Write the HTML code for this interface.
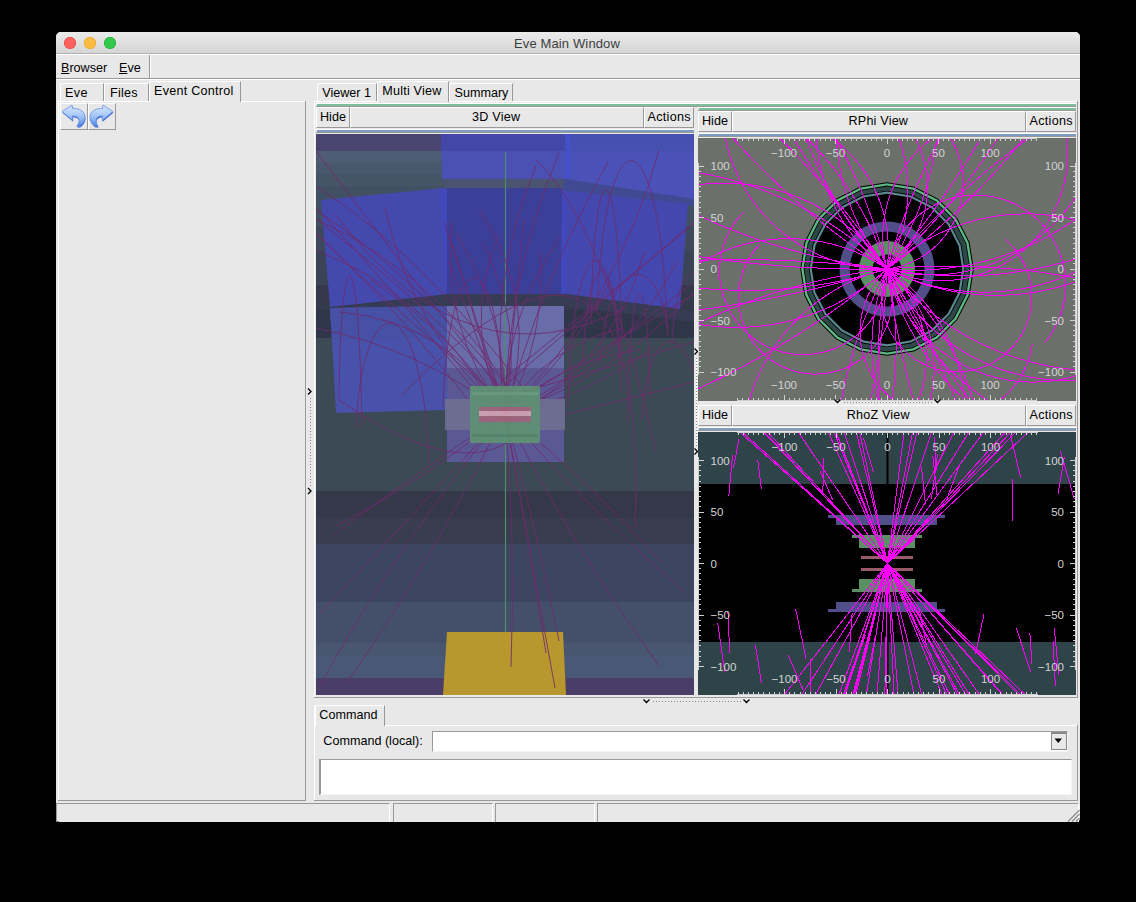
<!DOCTYPE html>
<html><head><meta charset="utf-8"><style>
*{margin:0;padding:0;box-sizing:border-box}
html,body{width:1136px;height:902px;background:#000;overflow:hidden;font-family:"Liberation Sans", sans-serif;font-size:12.6px;color:#000}
.a{position:absolute}
.t{position:absolute;white-space:nowrap;line-height:14px}
svg{position:absolute;display:block}
</style></head><body>
<div class="a" style="left:56px;top:32px;width:1024px;height:790px;background:#e8e8e8;border-radius:5px 5px 4px 4px"></div><div class="a" style="left:56px;top:32px;width:1024px;height:22px;background:linear-gradient(#ebebeb,#d4d4d4);border-radius:5px 5px 0 0"></div><div class="a" style="left:56px;top:53px;width:1024px;height:1px;background:#b1b1b1"></div><div class="a" style="left:64px;top:37px;width:12px;height:12px;border-radius:50%;background:#fc615d;box-shadow:inset 0 0 0 0.5px #e0443e"></div><div class="a" style="left:84px;top:37px;width:12px;height:12px;border-radius:50%;background:#fdbc40;box-shadow:inset 0 0 0 0.5px #dea123"></div><div class="a" style="left:104px;top:37px;width:12px;height:12px;border-radius:50%;background:#34c84a;box-shadow:inset 0 0 0 0.5px #1aab29"></div><div class="t" style="left:514px;top:37px;font-size:13px;color:#3e3e3e;letter-spacing:0.13px">Eve Main Window</div><div class="a" style="left:56px;top:54px;width:1024px;height:1px;background:#fff"></div><div class="t" style="left:61px;top:61px;font-size:12.6px;color:#000;"><u>B</u>rowser</div><div class="t" style="left:119px;top:61px;font-size:12.6px;color:#000;"><u>E</u>ve</div><div class="a" style="left:149px;top:55px;width:1px;height:23px;background:#999"></div><div class="a" style="left:150px;top:55px;width:1px;height:23px;background:#fff"></div><div class="a" style="left:56px;top:78px;width:1024px;height:1px;background:#999"></div><div class="a" style="left:56px;top:79px;width:1024px;height:1px;background:#fff"></div><div class="a" style="left:60px;top:83px;width:44px;height:18px;background:#e8e8e8;border-top:1px solid #fff;border-left:1px solid #fff;border-right:1px solid #999;border-top-left-radius:2px"></div><div class="t" style="left:65px;top:86px;font-size:12.6px;color:#000;letter-spacing:0.4px">Eve</div><div class="a" style="left:104px;top:83px;width:45px;height:18px;background:#e8e8e8;border-top:1px solid #fff;border-left:1px solid #fff;border-right:1px solid #999;border-top-left-radius:2px"></div><div class="t" style="left:110px;top:86px;font-size:12.6px;color:#000;letter-spacing:0.25px">Files</div><div class="a" style="left:149px;top:81px;width:92px;height:21px;background:#e8e8e8;border-top:1px solid #fff;border-left:1px solid #fff;border-right:1px solid #999;border-top-left-radius:2px"></div><div class="t" style="left:154px;top:84px;font-size:12.6px;color:#000;letter-spacing:0.25px">Event Control</div><div class="a" style="left:58px;top:101px;width:91px;height:1px;background:#fff"></div><div class="a" style="left:241px;top:101px;width:64px;height:1px;background:#fff"></div><div class="a" style="left:58px;top:101px;width:1px;height:699px;background:#fff"></div><div class="a" style="left:305px;top:101px;width:1px;height:700px;background:#999"></div><div class="a" style="left:58px;top:800px;width:248px;height:1px;background:#999"></div><div class="a" style="left:60px;top:103px;width:28px;height:27px;background:#e8e8e8;border-top:1px solid #fff;border-left:1px solid #fff;border-right:1px solid #999;border-bottom:1px solid #999"></div><div class="a" style="left:88px;top:103px;width:28px;height:27px;background:#e8e8e8;border-top:1px solid #fff;border-left:1px solid #fff;border-right:1px solid #999;border-bottom:1px solid #999"></div><svg style="left:0;top:0" width="130" height="135" viewBox="0 0 130 135">
<defs><linearGradient id="ug" x1="0" y1="0" x2="0" y2="1"><stop offset="0" stop-color="#cfe2fd"/><stop offset="0.35" stop-color="#b8d4fb"/><stop offset="0.7" stop-color="#8ab2f4"/><stop offset="1" stop-color="#4f82e8"/></linearGradient></defs>
<path d="M62,111.5 L72,105 L72.6,108.4 C78,108.2 83.5,110.3 84.8,115.3 C85.8,119.5 83.5,124 79.8,126.2 L76.8,126.2 C79.2,123.5 79.6,120.5 78.4,118.6 C77.2,116.8 75.2,116 72.6,116 L72.8,120.6 Z" transform="translate(0.4,1.2)" fill="#3a66d0"/>
<path d="M62,111.5 L72,105 L72.6,108.4 C78,108.2 83.5,110.3 84.8,115.3 C85.8,119.5 83.5,124 79.8,126.2 L76.8,126.2 C79.2,123.5 79.6,120.5 78.4,118.6 C77.2,116.8 75.2,116 72.6,116 L72.8,120.6 Z" transform="translate(175.4,1.2) scale(-1,1)" fill="#3a66d0"/>
<path d="M62,111.5 L72,105 L72.6,108.4 C78,108.2 83.5,110.3 84.8,115.3 C85.8,119.5 83.5,124 79.8,126.2 L76.8,126.2 C79.2,123.5 79.6,120.5 78.4,118.6 C77.2,116.8 75.2,116 72.6,116 L72.8,120.6 Z" fill="url(#ug)" stroke="#5a88e0" stroke-width="0.7"/>
<path d="M62,111.5 L72,105 L72.6,108.4 C78,108.2 83.5,110.3 84.8,115.3 C85.8,119.5 83.5,124 79.8,126.2 L76.8,126.2 C79.2,123.5 79.6,120.5 78.4,118.6 C77.2,116.8 75.2,116 72.6,116 L72.8,120.6 Z" transform="translate(175,0) scale(-1,1)" fill="url(#ug)" stroke="#5a88e0" stroke-width="0.7"/>
</svg><div class="a" style="left:314px;top:101px;width:1px;height:1px;background:#fff"></div><svg style="left:306px;top:385px" width="8" height="112" viewBox="306 385 8 112"><path d="M308,388.5 L311,391.5 L308,394.5 M308,488 L311,491 L308,494" stroke="#000" stroke-width="1.3" fill="none"/></svg><div class="a" style="left:310px;top:398px;width:1px;height:88px;background:repeating-linear-gradient(#8a8a8a 0 1px,transparent 1px 3px)"></div><div class="a" style="left:317px;top:83px;width:60px;height:18px;background:#e8e8e8;border-top:1px solid #fff;border-left:1px solid #fff;border-right:1px solid #999;border-top-left-radius:2px"></div><div class="t" style="left:322.3px;top:86px;font-size:12.6px;color:#000;">Viewer 1</div><div class="a" style="left:377px;top:81px;width:72px;height:21px;background:#e8e8e8;border-top:1px solid #fff;border-left:1px solid #fff;border-right:1px solid #999;border-top-left-radius:2px"></div><div class="t" style="left:382.3px;top:84px;font-size:12.6px;color:#000;letter-spacing:0.2px">Multi View</div><div class="a" style="left:449px;top:83px;width:64px;height:18px;background:#e8e8e8;border-top:1px solid #fff;border-left:1px solid #fff;border-right:1px solid #999;border-top-left-radius:2px"></div><div class="t" style="left:454.5px;top:86px;font-size:12.6px;color:#000;">Summary</div><div class="a" style="left:314px;top:101px;width:63px;height:1px;background:#fff"></div><div class="a" style="left:449px;top:101px;width:629px;height:1px;background:#fff"></div><div class="a" style="left:314px;top:101px;width:1px;height:597px;background:#fff"></div><div class="a" style="left:1077px;top:101px;width:1px;height:597px;background:#999"></div><div class="a" style="left:314px;top:697px;width:764px;height:1px;background:#999"></div><div class="a" style="left:316px;top:103px;width:760px;height:1px;background:#fff"></div><div class="a" style="left:317px;top:104px;width:759px;height:2px;background:#7dbd9c;"></div><div class="a" style="left:316px;top:106px;width:760px;height:1px;background:#999"></div><div class="a" style="left:316px;top:107px;width:34px;height:21px;background:#e8e8e8;border-top:1px solid #fff;border-left:1px solid #fff;border-right:1px solid #999;border-bottom:1px solid #999"></div><div class="t" style="left:320px;top:110px;font-size:12.6px;color:#000;">Hide</div><div class="a" style="left:350px;top:107px;width:294px;height:21px;background:#e8e8e8;border-top:1px solid #fff;border-left:1px solid #fff;border-right:1px solid #999;border-bottom:1px solid #999"></div><div class="t" style="left:472px;top:110px;font-size:12.6px;color:#000;letter-spacing:0.25px">3D View</div><div class="a" style="left:644px;top:107px;width:50px;height:21px;background:#e8e8e8;border-top:1px solid #fff;border-left:1px solid #fff;border-right:1px solid #999;border-bottom:1px solid #999"></div><div class="t" style="left:647.5px;top:110px;font-size:12.6px;color:#000;letter-spacing:0.3px">Actions</div><div class="a" style="left:316px;top:129px;width:378px;height:1px;background:#fff"></div><div class="a" style="left:317px;top:130px;width:377px;height:2px;background:#7c9dc0;"></div><div class="a" style="left:316px;top:132px;width:378px;height:1px;background:#999"></div><svg style="left:316px;top:134px" width="378" height="561" viewBox="316 134 378 561"><rect x="316" y="134" width="378" height="17" fill="#4a4470"/><rect x="316" y="151" width="378" height="12" fill="#4e5c74"/><rect x="316" y="163" width="378" height="11" fill="#4a586e"/><rect x="316" y="174" width="378" height="12" fill="#465468"/><rect x="316" y="186" width="378" height="40" fill="#415062"/><rect x="316" y="226" width="378" height="25" fill="#3e4a5c"/><rect x="316" y="251" width="378" height="34" fill="#3a4456"/><rect x="316" y="285" width="378" height="25" fill="#343a4c"/><rect x="316" y="310" width="378" height="28" fill="#30364a"/><rect x="316" y="338" width="378" height="153" fill="#3c4a55"/><rect x="316" y="491" width="378" height="27" fill="#343848"/><rect x="316" y="518" width="378" height="26" fill="#383e50"/><rect x="316" y="544" width="378" height="58" fill="#3c4660"/><rect x="316" y="602" width="378" height="41" fill="#44506a"/><rect x="316" y="643" width="378" height="13" fill="#485670"/><rect x="316" y="656" width="378" height="22" fill="#4a5878"/><rect x="316" y="678" width="378" height="17" fill="#4a3e68"/><polygon points="441,134 565,134 565,179 442,179" fill="#4a51b2"/><rect x="441" y="134" width="124" height="17" fill="#4347a8"/><polygon points="565,134 694,134 694,200 565,179" fill="#4a52b8"/><rect x="565" y="134" width="5" height="45" fill="#4450c8"/><rect x="570" y="134" width="124" height="17" fill="#4650b0"/><polygon points="442,179 565,179 565,190 444,188" fill="#4a5470"/><polygon points="565,179 694,199 694,206 688,205 562,190" fill="#3f4a92"/><polygon points="321,200 444,188 450,294 330,307" fill="#4449ae"/><polygon points="440,189 450,188 455,294 446,294" fill="#4048bc"/><rect x="447" y="188" width="115" height="106" fill="#3b3f98"/><polygon points="562,190 688,204 680,309 561,294" fill="#4448ae"/><polygon points="562,190 567,191 566,294 561,294" fill="#4048bc"/><polygon points="330,309 450,294 566,294 680,309 694,311 694,322 566,306 447,306 330,316" fill="#363c54"/><polygon points="330,308 447,306 447,410 336,413" fill="#4952aa"/><polygon points="330,308 447,306 447,338 332,340" fill="#4650a4"/><rect x="447" y="306" width="117" height="62" fill="#686daa"/><rect x="447" y="368" width="117" height="94" fill="#5a5996"/><line x1="505.5" y1="152" x2="505.5" y2="672" stroke="#4e8c6c" stroke-width="1.2"/><polygon points="447,632 563,632 566,695 443,695" fill="#b8982e"/><path d="M505,414Q507,316 456,233M505,414Q516,540 511,667M505,414Q547,338 540,251M505,414Q421,349 316,328M505,414Q536,526 559,641M505,414Q562,359 640,350M505,414Q413,515 319,614M505,414Q461,327 498,236M505,414Q436,554 347,683M505,414Q589,509 685,593M505,414Q477,330 453,245M505,414Q399,542 319,687M505,414Q543,307 480,211M505,414Q448,322 340,312M505,414Q486,285 536,166M505,414Q504,316 561,237M505,414Q440,328 452,221M505,414Q541,282 608,162M505,414Q614,367 644,253M505,414Q530,551 555,688M505,414Q545,346 623,328M505,414Q572,546 659,666M505,414Q411,330 385,207M505,414Q614,377 693,293M505,414Q587,397 654,347M505,414Q620,371 677,262M505,414Q507,278 559,153M505,414Q570,358 610,282M505,414Q416,473 331,537M505,414Q528,533 546,653M505,414Q590,481 661,562M505,414Q525,324 482,242M505,414Q514,317 524,219M505,414Q451,332 369,279M505,414Q618,303 659,150M505,414Q427,479 336,526M597,312C604,108 660,108 667,328M591,324C594,140 619,140 622,352M502,383C496,239 449,239 443,407M668,336C662,250 606,250 600,365M672,344C676,252 710,252 714,329M356,427C363,283 422,283 429,463M568,407C573,215 616,215 621,391M339,399C341,230 359,230 362,428M583,362C587,242 616,242 620,356M650,398C648,256 630,256 628,421M642,420C648,310 699,310 706,455M316,219Q451,281 529,421M316,151Q410,276 505,396M316,250Q428,295 486,395M316,233Q418,330 489,428M316,210Q417,275 531,414M316,208Q396,291 500,422M316,186Q421,253 528,394M316,234Q410,324 515,411M316,219Q437,313 502,389M694,382L535,422M694,224L500,382M694,342L516,394M694,222L504,386M694,282L496,434M694,294L471,428M627,307Q468,391 335,214M401,396Q650,142 635,528M536,160Q603,222 656,452M339,400Q494,507 545,398M444,222Q553,549 449,261" fill="none" stroke="#6e2a6c" stroke-width="1" opacity="0.85"/><g opacity="0.88"><rect x="445" y="399" width="120" height="31" fill="#707092"/><rect x="470" y="386" width="70" height="57" fill="#5f9672"/><rect x="472" y="392" width="66" height="3" fill="#6aa47c"/><rect x="472" y="434" width="66" height="3" fill="#548a66"/><rect x="479" y="407" width="52" height="15" fill="#a4687a"/><rect x="479" y="411" width="52" height="5" fill="#d8a8b4"/></g></svg><div class="a" style="left:694px;top:107px;width:4px;height:588px;background:#e8e8e8;"></div><svg style="left:692px;top:345px" width="8" height="113" viewBox="692 345 8 113"><path d="M694.5,348.5 L697.5,351.5 L694.5,354.5 M694.5,448.5 L697.5,451.5 L694.5,454.5" stroke="#000" stroke-width="1.3" fill="none"/></svg><div class="a" style="left:696px;top:358px;width:1px;height:88px;background:repeating-linear-gradient(#8a8a8a 0 1px,#fff 1px 3px)"></div><div class="a" style="left:698px;top:107px;width:378px;height:1px;background:#fff"></div><div class="a" style="left:699px;top:108px;width:377px;height:2px;background:#7dbd9c;"></div><div class="a" style="left:698px;top:110px;width:378px;height:1px;background:#999"></div><div class="a" style="left:698px;top:111px;width:34px;height:21px;background:#e8e8e8;border-top:1px solid #fff;border-left:1px solid #fff;border-right:1px solid #999;border-bottom:1px solid #999"></div><div class="t" style="left:702px;top:114px;font-size:12.6px;color:#000;">Hide</div><div class="a" style="left:732px;top:111px;width:294px;height:21px;background:#e8e8e8;border-top:1px solid #fff;border-left:1px solid #fff;border-right:1px solid #999;border-bottom:1px solid #999"></div><div class="t" style="left:848.5px;top:114px;font-size:12.6px;color:#000;letter-spacing:0.2px">RPhi View</div><div class="a" style="left:1026px;top:111px;width:50px;height:21px;background:#e8e8e8;border-top:1px solid #fff;border-left:1px solid #fff;border-right:1px solid #999;border-bottom:1px solid #999"></div><div class="t" style="left:1029.5px;top:114px;font-size:12.6px;color:#000;letter-spacing:0.3px">Actions</div><div class="a" style="left:698px;top:133px;width:378px;height:1px;background:#fff"></div><div class="a" style="left:699px;top:134px;width:377px;height:2px;background:#7c9dc0;"></div><div class="a" style="left:698px;top:136px;width:378px;height:1px;background:#999"></div><svg style="left:698px;top:138px" width="378" height="263" viewBox="698 138 378 263"><rect x="698" y="138" width="378" height="263" fill="#6b706b"/><polygon points="887.0,355.8 860.2,351.6 836.0,339.2 816.8,320.0 804.4,295.8 800.2,269.0 804.4,242.2 816.8,218.0 836.0,198.8 860.2,186.4 887.0,182.2 913.8,186.4 938.0,198.8 957.2,218.0 969.6,242.2 973.8,269.0 969.6,295.8 957.2,320.0 938.0,339.2 913.8,351.6" fill="#000"/><polygon points="887.0,354.8 860.5,350.6 836.6,338.4 817.6,319.4 805.4,295.5 801.2,269.0 805.4,242.5 817.6,218.6 836.6,199.6 860.5,187.4 887.0,183.2 913.5,187.4 937.4,199.6 956.4,218.6 968.6,242.5 972.8,269.0 968.6,295.5 956.4,319.4 937.4,338.4 913.5,350.6" fill="#5cb880"/><polygon points="887.0,352.4 861.2,348.3 838.0,336.5 819.5,318.0 807.7,294.8 803.6,269.0 807.7,243.2 819.5,220.0 838.0,201.5 861.2,189.7 887.0,185.6 912.8,189.7 936.0,201.5 954.5,220.0 966.3,243.2 970.4,269.0 966.3,294.8 954.5,318.0 936.0,336.5 912.8,348.3" fill="#000"/><polygon points="887.0,351.6 861.5,347.6 838.4,335.8 820.2,317.6 808.4,294.5 804.4,269.0 808.4,243.5 820.2,220.4 838.4,202.2 861.5,190.4 887.0,186.4 912.5,190.4 935.6,202.2 953.8,220.4 965.6,243.5 969.6,269.0 965.6,294.5 953.8,317.6 935.6,335.8 912.5,347.6" fill="#2e4848"/><polygon points="887.0,347.2 862.8,343.4 841.0,332.3 823.7,315.0 812.6,293.2 808.8,269.0 812.6,244.8 823.7,223.0 841.0,205.7 862.8,194.6 887.0,190.8 911.2,194.6 933.0,205.7 950.3,223.0 961.4,244.8 965.2,269.0 961.4,293.2 950.3,315.0 933.0,332.3 911.2,343.4" fill="#000"/><polygon points="887.0,346.4 863.1,342.6 841.5,331.6 824.4,314.5 813.4,292.9 809.6,269.0 813.4,245.1 824.4,223.5 841.5,206.4 863.1,195.4 887.0,191.6 910.9,195.4 932.5,206.4 949.6,223.5 960.6,245.1 964.4,269.0 960.6,292.9 949.6,314.5 932.5,331.6 910.9,342.6" fill="#5a8a90"/><polygon points="887.0,344.2 863.8,340.5 842.8,329.8 826.2,313.2 815.5,292.2 811.8,269.0 815.5,245.8 826.2,224.8 842.8,208.2 863.8,197.5 887.0,193.8 910.2,197.5 931.2,208.2 947.8,224.8 958.5,245.8 962.2,269.0 958.5,292.2 947.8,313.2 931.2,329.8 910.2,340.5" fill="#000"/><circle cx="887" cy="269" r="47.5" fill="#514f8a"/><circle cx="887" cy="269" r="37.5" fill="#000"/><circle cx="887" cy="269" r="28" fill="#5b8f64"/><circle cx="887" cy="269" r="14.5" fill="#000"/><path d="M887.0,269.0 L878.9,271.5 L870.8,273.9 L862.7,276.2 L854.5,278.5 L846.3,280.7 L838.2,282.9 L830.0,285.0 L821.8,287.0 L813.5,289.0 L805.3,290.9 L797.0,292.7 L788.8,294.5 L780.5,296.3 L772.2,297.9 L763.9,299.5 L755.6,301.1 L747.2,302.6 L738.9,304.0 L730.5,305.3 L722.2,306.6 L713.8,307.9 L705.4,309.0 L697.0,310.1 L688.6,311.2 L680.2,312.2 L671.8,313.1 L663.4,313.9 L655.0,314.7 L646.5,315.4 L638.1,316.1 L629.7,316.7 L621.2,317.3 L612.8,317.7 L604.3,318.1 L595.9,318.5 L587.4,318.8 L579.0,319.0 L570.5,319.2 L562.0,319.3M887.0,269.0 L878.9,271.4 L870.8,273.8 L862.6,275.9 L854.4,277.9 L846.1,279.8 L837.8,281.5 L829.5,283.1 L821.2,284.5 L812.8,285.7 L804.4,286.8 L796.0,287.8 L787.6,288.6 L779.1,289.3 L770.7,289.8 L762.2,290.1 L753.8,290.3 L745.3,290.4 L736.9,290.3 L728.4,290.0 L719.9,289.6 L711.5,289.1 L703.1,288.4 L694.7,287.5 L686.3,286.5 L677.9,285.4 L669.5,284.0 L661.2,282.6 L652.9,281.0 L644.6,279.2 L636.4,277.3 L628.1,275.2 L620.0,273.0 L611.8,270.7 L603.8,268.2 L595.7,265.6 L587.7,262.8 L579.8,259.9 L571.9,256.8 L564.1,253.6M887.0,269.0 L881.3,262.8 L875.7,256.4 L870.2,249.9 L864.9,243.4 L859.8,236.7 L854.8,229.8 L849.9,222.9 L845.2,215.9 L840.6,208.7 L836.2,201.5 L832.0,194.2 L827.9,186.8 L824.0,179.3 L820.3,171.7 L816.7,164.0 L813.3,156.2 L810.1,148.4 L807.0,140.5 L804.2,132.6 L801.4,124.6 L798.9,116.5 L796.6,108.4 L794.4,100.2 L792.4,92.0 L790.6,83.7 L789.0,75.4 L787.5,67.1 L786.2,58.7 L785.2,50.3 L784.3,41.9 L783.6,33.5 L783.0,25.0 L782.7,16.6 L782.5,8.1 L782.6,-0.4 L782.8,-8.8 L783.2,-17.3 L783.8,-25.7 L784.6,-34.1M887.0,269.0 L892.4,275.5 L898.0,281.8 L903.8,288.0 L909.8,293.9 L916.0,299.7 L922.4,305.3 L928.9,310.7 L935.6,315.9 L942.4,320.9 L949.4,325.6 L956.5,330.2 L963.8,334.5 L971.2,338.6 L978.7,342.5 L986.4,346.1 L994.1,349.5 L1002.0,352.7 L1009.9,355.6 L1017.9,358.3 L1026.1,360.7 L1034.2,362.9 L1042.5,364.8 L1050.8,366.5 L1059.1,367.9 L1067.5,369.0 L1075.9,369.9 L1084.3,370.5 L1092.8,370.9 L1101.3,371.0 L1109.7,370.9 L1118.2,370.5 L1126.6,369.8 L1135.0,368.9 L1143.4,367.7 L1151.7,366.2 L1160.0,364.5 L1168.3,362.6 L1176.4,360.4 L1184.5,357.9M887.0,269.0 L879.9,264.4 L872.6,260.1 L865.1,256.2 L857.4,252.7 L849.5,249.6 L841.5,246.8 L833.4,244.4 L825.2,242.5 L816.9,240.9 L808.5,239.7 L800.1,239.0 L791.6,238.6 L783.1,238.7 L774.7,239.2 L766.3,240.1 L757.9,241.3 L749.6,243.0 L741.4,245.1 L733.4,247.6 L725.4,250.5 L717.6,253.8 L710.0,257.4 L702.5,261.4 L695.3,265.8 L688.2,270.5 L681.4,275.6 L674.9,280.9 L668.6,286.6 L662.6,292.6 L657.0,298.8 L651.6,305.4 L646.5,312.2 L641.8,319.2 L637.4,326.4 L633.4,333.9 L629.8,341.5 L626.5,349.3 L623.6,357.3 L621.1,365.3M887.0,269.0 L880.9,263.2 L874.6,257.5 L868.2,251.9 L861.7,246.5 L855.1,241.3 L848.3,236.2 L841.4,231.3 L834.4,226.6 L827.3,222.0 L820.1,217.6 L812.7,213.3 L805.3,209.3 L797.8,205.4 L790.2,201.7 L782.5,198.1 L774.7,194.8 L766.9,191.6 L759.0,188.7 L751.0,185.9 L742.9,183.3 L734.8,180.9 L726.6,178.7 L718.4,176.7 L710.1,174.9 L701.8,173.3 L693.5,171.8 L685.1,170.6 L676.7,169.6 L668.3,168.7 L659.9,168.1 L651.4,167.7 L643.0,167.5 L634.5,167.4 L626.0,167.6 L617.6,168.0 L609.1,168.6 L600.7,169.3 L592.3,170.3 L583.9,171.5M887.0,269.0 L889.7,277.0 L891.4,285.3 L892.3,293.7 L892.2,302.2 L891.2,310.6 L889.3,318.8 L886.5,326.8 L882.8,334.4 L878.3,341.6 L873.1,348.2 L867.1,354.2 L860.5,359.5 L853.4,364.1 L845.9,367.9 L837.9,370.8 L829.7,372.8 L821.3,373.9 L812.9,374.1 L804.4,373.3 L796.1,371.7 L788.1,369.1 L780.4,365.7 L773.1,361.4 L766.3,356.4 L760.1,350.6 L754.5,344.2 L749.8,337.2 L745.8,329.8 L742.6,321.9 L740.3,313.8 L739.0,305.4 L738.5,297.0 L739.0,288.6 L740.4,280.2 L742.8,272.1 L745.9,264.3 L750.0,256.8 L754.8,249.9 L760.4,243.5M887.0,269.0 L883.2,276.5 L879.5,284.2 L875.9,291.8 L872.5,299.6 L869.2,307.4 L866.0,315.2 L863.0,323.1 L860.1,331.1 L857.4,339.1 L854.8,347.1 L852.4,355.2 L850.1,363.4 L847.9,371.6 L845.9,379.8 L844.1,388.0 L842.4,396.3 L840.8,404.7 L839.4,413.0 L838.1,421.4 L837.0,429.7 L836.0,438.2 L835.2,446.6 L834.5,455.0 L834.0,463.5 L833.7,471.9 L833.4,480.4 L833.4,488.8 L833.5,497.3 L833.7,505.7 L834.1,514.2 L834.6,522.6 L835.3,531.1 L836.1,539.5 L837.1,547.9 L838.2,556.3 L839.5,564.7 L840.9,573.0 L842.5,581.3 L844.2,589.6M887.0,269.0 L881.7,262.4 L876.7,255.5 L872.0,248.5 L867.5,241.3 L863.4,234.0 L859.4,226.5 L855.8,218.8 L852.5,211.1 L849.5,203.2 L846.7,195.2 L844.3,187.0 L842.2,178.8 L840.4,170.6 L839.0,162.2 L837.8,153.9 L836.9,145.4 L836.4,137.0 L836.2,128.5 L836.4,120.1 L836.8,111.6 L837.6,103.2 L838.7,94.8 L840.1,86.5 L841.8,78.2 L843.8,70.0 L846.2,61.9 L848.8,53.8 L851.8,45.9 L855.0,38.1 L858.6,30.4 L862.4,22.9 L866.6,15.5 L871.0,8.3 L875.6,1.2 L880.6,-5.7 L885.8,-12.3 L891.2,-18.8 L896.9,-25.1 L902.8,-31.1M887.0,269.0 L882.1,262.1 L876.9,255.4 L871.4,249.0 L865.6,242.8 L859.6,236.9 L853.3,231.2 L846.8,225.8 L840.1,220.6 L833.2,215.8 L826.0,211.3 L818.7,207.1 L811.2,203.2 L803.5,199.6 L795.7,196.4 L787.7,193.5 L779.6,190.9 L771.5,188.7 L763.2,186.9 L754.9,185.4 L746.5,184.3 L738.1,183.5 L729.6,183.1 L721.2,183.1 L712.7,183.4 L704.3,184.1 L695.9,185.1 L687.5,186.5 L679.3,188.3 L671.1,190.4 L663.0,192.8 L655.0,195.7 L647.1,198.8 L639.4,202.3 L631.9,206.1 L624.5,210.2 L617.3,214.7 L610.3,219.5 L603.5,224.5 L597.0,229.8M887.0,269.0 L885.1,260.8 L883.7,252.4 L882.9,244.0 L882.7,235.5 L883.1,227.1 L884.1,218.7 L885.6,210.4 L887.7,202.2 L890.4,194.1 L893.6,186.3 L897.3,178.7 L901.6,171.4 L906.3,164.4 L911.5,157.8 L917.2,151.5 L923.3,145.6 L929.8,140.1 L936.6,135.2 L943.8,130.7 L951.2,126.7 L958.9,123.2 L966.9,120.2 L975.0,117.9 L983.2,116.0 L991.6,114.8 L1000.0,114.1 L1008.5,114.0 L1017.0,114.5 L1025.3,115.6 L1033.6,117.3 L1041.8,119.5 L1049.8,122.2 L1057.6,125.6 L1065.1,129.4 L1072.4,133.8 L1079.3,138.6 L1085.9,143.9 L1092.1,149.7 L1097.9,155.8M887.0,269.0 L895.3,270.5 L903.7,271.8 L912.1,272.9 L920.5,273.9 L928.9,274.6 L937.4,275.2 L945.8,275.6 L954.3,275.9 L962.7,275.9 L971.2,275.8 L979.6,275.5 L988.1,275.0 L996.5,274.3 L1004.9,273.5 L1013.3,272.4 L1021.7,271.2 L1030.1,269.8 L1038.4,268.3 L1046.7,266.5 L1054.9,264.6 L1063.1,262.5 L1071.2,260.3 L1079.3,257.8 L1087.4,255.2 L1095.4,252.4 L1103.3,249.5 L1111.2,246.3 L1119.0,243.1 L1126.7,239.6 L1134.4,236.0 L1141.9,232.2 L1149.4,228.3 L1156.8,224.2 L1164.1,219.9 L1171.4,215.5 L1178.5,211.0 L1185.5,206.2 L1192.4,201.4 L1199.3,196.4M887.0,269.0 L891.7,262.0 L896.2,254.8 L900.5,247.5 L904.6,240.1 L908.5,232.6 L912.2,225.0 L915.6,217.2 L918.8,209.4 L921.8,201.5 L924.5,193.5 L927.0,185.4 L929.3,177.3 L931.3,169.0 L933.1,160.8 L934.7,152.5 L936.0,144.1 L937.0,135.7 L937.9,127.3 L938.4,118.8 L938.8,110.4 L938.8,101.9 L938.7,93.5 L938.3,85.0 L937.6,76.6 L936.7,68.2 L935.5,59.8 L934.2,51.4 L932.5,43.1 L930.6,34.9 L928.5,26.7 L926.2,18.6 L923.6,10.5 L920.8,2.5 L917.7,-5.4 L914.4,-13.2 L910.9,-20.9 L907.2,-28.4 L903.2,-35.9 L899.1,-43.3M887.0,269.0 L888.8,277.3 L890.4,285.6 L891.9,293.9 L893.1,302.3 L894.1,310.7 L894.9,319.1 L895.5,327.5 L895.9,336.0 L896.1,344.5 L896.1,352.9 L895.8,361.4 L895.4,369.8 L894.8,378.3 L893.9,386.7 L892.9,395.1 L891.6,403.4 L890.2,411.8 L888.5,420.1 L886.6,428.3 L884.6,436.5 L882.3,444.7 L879.9,452.8 L877.2,460.8 L874.4,468.8 L871.3,476.7 L868.1,484.5 L864.6,492.2 L861.0,499.9 L857.2,507.5 L853.3,514.9 L849.1,522.3 L844.8,529.6 L840.2,536.7 L835.6,543.8 L830.7,550.7 L825.7,557.5 L820.5,564.2 L815.1,570.7 L809.6,577.1M887.0,269.0 L895.3,267.6 L903.5,265.3 L911.4,262.3 L918.9,258.5 L926.1,254.0 L932.8,248.8 L938.9,243.0 L944.5,236.6 L949.4,229.7 L953.6,222.4 L957.1,214.7 L959.8,206.6 L961.7,198.4 L962.8,190.0 L963.1,181.6 L962.6,173.1 L961.2,164.8 L959.0,156.6 L956.1,148.7 L952.4,141.1 L948.0,133.9 L942.9,127.1 L937.1,120.9 L930.8,115.3 L924.0,110.3 L916.7,106.0 L909.0,102.5 L901.0,99.7 L892.8,97.6 L884.4,96.4 L876.0,96.1 L867.5,96.5 L859.2,97.8 L851.0,99.8 L843.0,102.7 L835.4,106.3 L828.1,110.7 L821.3,115.7 L815.0,121.4M887.0,269.0 L888.9,260.8 L891.6,252.7 L895.0,245.0 L899.1,237.6 L903.9,230.6 L909.3,224.1 L915.3,218.2 L921.8,212.8 L928.9,208.1 L936.3,204.0 L944.1,200.7 L952.1,198.1 L960.4,196.3 L968.8,195.3 L977.2,195.0 L985.7,195.6 L994.0,196.9 L1002.2,199.0 L1010.2,201.9 L1017.8,205.5 L1025.1,209.8 L1031.9,214.8 L1038.3,220.4 L1044.1,226.5 L1049.2,233.2 L1053.8,240.4 L1057.6,247.9 L1060.8,255.8 L1063.1,263.9 L1064.7,272.2 L1065.5,280.6 L1065.6,289.1 L1064.8,297.5 L1063.2,305.8 L1060.9,313.9 L1057.8,321.8 L1054.0,329.4 L1049.5,336.5 L1044.3,343.2M887.0,269.0 L895.4,269.7 L903.9,270.1 L912.3,270.3 L920.8,270.2 L929.3,269.9 L937.7,269.3 L946.1,268.4 L954.5,267.3 L962.9,266.0 L971.2,264.4 L979.4,262.5 L987.6,260.5 L995.8,258.1 L1003.8,255.5 L1011.8,252.7 L1019.7,249.7 L1027.5,246.4 L1035.2,242.9 L1042.8,239.1 L1050.2,235.1 L1057.6,230.9 L1064.8,226.5 L1071.9,221.9 L1078.8,217.0 L1085.6,212.0 L1092.2,206.7 L1098.7,201.3 L1105.0,195.7 L1111.2,189.8 L1117.1,183.8 L1122.9,177.6 L1128.5,171.3 L1133.9,164.8 L1139.1,158.1 L1144.1,151.3 L1148.9,144.3 L1153.4,137.2 L1157.8,129.9 L1162.0,122.6M887.0,269.0 L886.8,277.5 L885.7,285.8 L883.8,294.1 L881.0,302.1 L877.5,309.8 L873.2,317.0 L868.2,323.9 L862.5,330.1 L856.2,335.8 L849.4,340.8 L842.1,345.1 L834.4,348.7 L826.4,351.4 L818.2,353.3 L809.8,354.4 L801.4,354.7 L792.9,354.0 L784.6,352.6 L776.5,350.3 L768.6,347.2 L761.1,343.3 L754.0,338.7 L747.4,333.4 L741.4,327.4 L736.0,320.9 L731.3,313.8 L727.4,306.4 L724.2,298.5 L721.8,290.4 L720.2,282.1 L719.5,273.7 L719.7,265.2 L720.7,256.8 L722.5,248.6 L725.2,240.5 L728.6,232.8 L732.8,225.5 L737.8,218.6 L743.4,212.3M887.0,269.0 L890.8,276.6 L894.6,284.1 L898.6,291.6 L902.6,299.0 L906.7,306.4 L910.9,313.8 L915.2,321.1 L919.6,328.3 L924.1,335.5 L928.6,342.6 L933.3,349.7 L938.0,356.7 L942.8,363.7 L947.7,370.6 L952.7,377.4 L957.7,384.2 L962.9,390.9 L968.1,397.6 L973.4,404.2 L978.8,410.7 L984.2,417.2 L989.8,423.6 L995.4,429.9 L1001.1,436.1 L1006.8,442.3 L1012.7,448.5 L1018.6,454.5 L1024.6,460.5 L1030.6,466.4 L1036.8,472.2 L1043.0,478.0 L1049.2,483.7 L1055.6,489.3 L1062.0,494.8 L1068.4,500.3 L1075.0,505.7 L1081.6,511.0 L1088.2,516.2 L1094.9,521.3M887.0,269.0 L895.4,268.3 L903.9,267.6 L912.3,267.1 L920.8,266.7 L929.2,266.4 L937.7,266.2 L946.1,266.1 L954.6,266.1 L963.1,266.2 L971.5,266.5 L980.0,266.8 L988.4,267.2 L996.9,267.8 L1005.3,268.4 L1013.7,269.2 L1022.2,270.0 L1030.6,271.0 L1039.0,272.0 L1047.3,273.2 L1055.7,274.5 L1064.1,275.9 L1072.4,277.3 L1080.7,278.9 L1089.0,280.6 L1097.3,282.4 L1105.5,284.3 L1113.7,286.3 L1121.9,288.4 L1130.1,290.6 L1138.2,292.9 L1146.3,295.3 L1154.4,297.8 L1162.5,300.4 L1170.5,303.2 L1178.5,306.0 L1186.4,308.9 L1194.3,311.9 L1202.2,315.0 L1210.0,318.2M887.0,269.0 L893.1,274.9 L898.7,281.2 L903.9,287.8 L908.6,294.9 L912.8,302.2 L916.5,309.8 L919.6,317.7 L922.1,325.8 L924.1,334.0 L925.5,342.4 L926.3,350.8 L926.4,359.2 L926.0,367.7 L925.0,376.1 L923.4,384.4 L921.2,392.6 L918.4,400.6 L915.0,408.3 L911.2,415.8 L906.7,423.1 L901.8,429.9 L896.4,436.5 L890.6,442.6 L884.3,448.3 L877.7,453.5 L870.7,458.3 L863.4,462.5 L855.8,466.2 L847.9,469.4 L839.9,472.0 L831.7,474.0 L823.3,475.4 L814.9,476.2 L806.4,476.4 L798.0,476.1 L789.6,475.1 L781.3,473.5 L773.1,471.4 L765.1,468.6M887.0,269.0 L892.5,262.6 L898.0,256.1 L903.4,249.6 L908.8,243.1 L914.0,236.5 L919.2,229.8 L924.4,223.1 L929.4,216.3 L934.4,209.5 L939.4,202.6 L944.2,195.7 L949.0,188.7 L953.7,181.7 L958.4,174.6 L963.0,167.5 L967.5,160.3 L971.9,153.1 L976.2,145.8 L980.5,138.5 L984.7,131.2 L988.9,123.8 L992.9,116.4 L996.9,108.9 L1000.8,101.4 L1004.6,93.9 L1008.4,86.3 L1012.1,78.7 L1015.7,71.0 L1019.2,63.3 L1022.6,55.6 L1026.0,47.8 L1029.3,40.0 L1032.5,32.2 L1035.6,24.3 L1038.6,16.4 L1041.6,8.5 L1044.5,0.5 L1047.3,-7.4 L1050.0,-15.4M887.0,269.0 L889.2,277.2 L891.7,285.3 L894.4,293.3 L897.3,301.2 L900.5,309.0 L904.0,316.8 L907.7,324.4 L911.7,331.8 L915.8,339.2 L920.2,346.4 L924.9,353.5 L929.7,360.4 L934.8,367.2 L940.1,373.8 L945.6,380.2 L951.3,386.5 L957.2,392.6 L963.3,398.4 L969.6,404.1 L976.0,409.6 L982.6,414.9 L989.4,419.9 L996.3,424.8 L1003.4,429.4 L1010.7,433.8 L1018.0,438.0 L1025.5,441.9 L1033.1,445.6 L1040.9,449.0 L1048.7,452.2 L1056.6,455.2 L1064.7,457.8 L1072.8,460.3 L1080.9,462.5 L1089.2,464.4 L1097.5,466.0 L1105.8,467.4 L1114.2,468.5 L1122.6,469.4M887.0,269.0 L895.2,271.0 L903.5,272.6 L911.9,273.8 L920.3,274.6 L928.8,274.9 L937.2,274.9 L945.7,274.4 L954.1,273.5 L962.5,272.2 L970.7,270.5 L978.9,268.4 L987.0,265.9 L995.0,262.9 L1002.7,259.6 L1010.4,256.0 L1017.8,251.9 L1025.0,247.5 L1032.0,242.7 L1038.7,237.6 L1045.2,232.2 L1051.4,226.4 L1057.4,220.4 L1063.0,214.1 L1068.3,207.5 L1073.2,200.6 L1077.8,193.5 L1082.1,186.2 L1086.0,178.7 L1089.5,171.0 L1092.7,163.2 L1095.4,155.2 L1097.8,147.0 L1099.7,138.8 L1101.3,130.5 L1102.4,122.1 L1103.1,113.7 L1103.4,105.2 L1103.3,96.7 L1102.7,88.3M887.0,269.0 L887.9,260.6 L888.4,252.1 L888.3,243.7 L887.7,235.2 L886.6,226.9 L884.9,218.6 L882.8,210.4 L880.1,202.3 L877.0,194.5 L873.4,186.8 L869.4,179.4 L864.9,172.2 L859.9,165.4 L854.6,158.8 L848.8,152.6 L842.7,146.7 L836.3,141.3 L829.5,136.2 L822.4,131.6 L815.1,127.4 L807.5,123.6 L799.7,120.4 L791.7,117.6 L783.5,115.3 L775.3,113.5 L766.9,112.2 L758.5,111.5 L750.0,111.2 L741.6,111.5 L733.2,112.3 L724.8,113.6 L716.5,115.4 L708.4,117.7 L700.4,120.5 L692.6,123.8 L685.0,127.6 L677.7,131.8 L670.6,136.5 L663.9,141.5M887.0,269.0 L894.6,272.7 L902.4,276.0 L910.3,279.1 L918.3,281.8 L926.4,284.2 L934.6,286.3 L942.9,288.1 L951.2,289.6 L959.6,290.7 L968.0,291.5 L976.5,292.0 L984.9,292.1 L993.4,292.0 L1001.8,291.4 L1010.2,290.6 L1018.6,289.4 L1026.9,287.9 L1035.2,286.1 L1043.4,283.9 L1051.5,281.5 L1059.5,278.7 L1067.3,275.6 L1075.1,272.2 L1082.7,268.5 L1090.2,264.5 L1097.5,260.2 L1104.6,255.7 L1111.5,250.8 L1118.3,245.7 L1124.8,240.4 L1131.2,234.8 L1137.3,228.9 L1143.1,222.8 L1148.8,216.5 L1154.1,210.0 L1159.3,203.2 L1164.1,196.3 L1168.7,189.2 L1173.0,181.9M887.0,269.0 L880.3,263.8 L873.9,258.3 L867.8,252.5 L861.9,246.4 L856.3,240.0 L851.1,233.3 L846.2,226.5 L841.6,219.3 L837.4,212.0 L833.6,204.5 L830.1,196.8 L827.0,188.9 L824.3,180.9 L821.9,172.7 L820.0,164.5 L818.5,156.2 L817.3,147.8 L816.6,139.4 L816.3,130.9 L816.4,122.4 L816.9,114.0 L817.9,105.6 L819.2,97.2 L820.9,89.0 L823.1,80.8 L825.6,72.7 L828.5,64.8 L831.8,57.0 L835.5,49.4 L839.6,41.9 L844.0,34.7 L848.7,27.7 L853.8,20.9 L859.2,14.4 L864.9,8.2 L870.9,2.2 L877.2,-3.5 L883.7,-8.8 L890.6,-13.8M887.0,269.0 L891.0,261.5 L894.6,253.9 L897.7,246.0 L900.5,238.0 L902.8,229.9 L904.7,221.6 L906.1,213.3 L907.1,204.9 L907.7,196.5 L907.8,188.0 L907.4,179.6 L906.6,171.1 L905.4,162.8 L903.7,154.5 L901.5,146.3 L899.0,138.2 L896.0,130.3 L892.6,122.6 L888.7,115.0 L884.5,107.7 L879.9,100.6 L875.0,93.7 L869.6,87.2 L864.0,80.9 L858.0,74.9 L851.6,69.3 L845.0,64.0 L838.2,59.0 L831.1,54.5 L823.7,50.3 L816.1,46.5 L808.4,43.2 L800.4,40.2 L792.4,37.7 L784.2,35.6 L775.9,33.9 L767.5,32.7 L759.1,32.0 L750.6,31.6M887.0,269.0 L884.0,276.9 L881.3,284.9 L879.0,293.1 L877.0,301.3 L875.3,309.6 L873.9,317.9 L872.9,326.3 L872.2,334.8 L871.9,343.2 L871.9,351.7 L872.2,360.1 L872.9,368.6 L873.9,377.0 L875.3,385.3 L877.0,393.6 L879.0,401.8 L881.3,409.9 L884.0,418.0 L887.0,425.9 L890.3,433.7 L893.9,441.3 L897.9,448.8 L902.1,456.1 L906.6,463.3 L911.4,470.3 L916.5,477.0 L921.8,483.6 L927.4,489.9 L933.3,496.0 L939.4,501.9 L945.7,507.5 L952.2,512.9 L959.0,518.0 L966.0,522.8 L973.1,527.3 L980.4,531.6 L987.9,535.5 L995.5,539.2 L1003.3,542.5M887.0,269.0 L891.6,276.1 L896.1,283.3 L900.5,290.5 L904.8,297.8 L909.1,305.1 L913.2,312.5 L917.3,319.9 L921.4,327.3 L925.3,334.8 L929.2,342.3 L933.0,349.9 L936.7,357.5 L940.3,365.1 L943.8,372.8 L947.3,380.5 L950.7,388.3 L954.0,396.1 L957.2,403.9 L960.3,411.8 L963.4,419.7 L966.3,427.6 L969.2,435.5 L972.0,443.5 L974.7,451.6 L977.3,459.6 L979.9,467.7 L982.3,475.8 L984.7,483.9 L987.0,492.0 L989.2,500.2 L991.3,508.4 L993.3,516.6 L995.2,524.9 L997.1,533.1 L998.8,541.4 L1000.5,549.7 L1002.1,558.0 L1003.6,566.3 L1005.0,574.7M887.0,269.0 L893.2,263.3 L899.4,257.4 L905.4,251.5 L911.4,245.6 L917.3,239.5 L923.2,233.4 L928.9,227.2 L934.6,220.9 L940.2,214.6 L945.8,208.2 L951.2,201.7 L956.6,195.2 L961.9,188.6 L967.1,181.9 L972.2,175.2 L977.2,168.4 L982.2,161.5 L987.0,154.6 L991.8,147.6 L996.5,140.6 L1001.1,133.5 L1005.6,126.3 L1010.1,119.1 L1014.4,111.8 L1018.6,104.5 L1022.8,97.1 L1026.8,89.7 L1030.8,82.2 L1034.7,74.7 L1038.5,67.1 L1042.2,59.5 L1045.7,51.9 L1049.2,44.2 L1052.6,36.4 L1055.9,28.6 L1059.1,20.8 L1062.3,12.9 L1065.3,5.0 L1068.2,-2.9M887.0,269.0 L893.4,274.6 L899.4,280.5 L904.9,286.9 L910.1,293.6 L914.8,300.6 L919.0,308.0 L922.8,315.5 L926.0,323.4 L928.7,331.4 L930.9,339.5 L932.6,347.8 L933.7,356.2 L934.2,364.7 L934.2,373.1 L933.6,381.6 L932.5,390.0 L930.8,398.3 L928.6,406.4 L925.8,414.4 L922.6,422.2 L918.8,429.8 L914.5,437.1 L909.8,444.1 L904.6,450.8 L899.0,457.1 L893.0,463.1 L886.6,468.6 L879.9,473.7 L872.8,478.4 L865.4,482.6 L857.8,486.3 L850.0,489.4 L842.0,492.1 L833.8,494.2 L825.5,495.8 L817.1,496.8 L808.6,497.3 L800.1,497.2 L791.7,496.6M887.0,269.0 L886.6,277.5 L886.1,285.9 L885.5,294.3 L884.8,302.8 L884.1,311.2 L883.2,319.6 L882.3,328.0 L881.3,336.4 L880.2,344.8 L879.0,353.2 L877.8,361.6 L876.4,369.9 L875.0,378.3 L873.5,386.6 L871.9,394.9 L870.2,403.2 L868.4,411.5 L866.5,419.7 L864.6,428.0 L862.6,436.2 L860.5,444.4 L858.3,452.5 L856.0,460.7 L853.7,468.8 L851.3,476.9 L848.7,485.0 L846.1,493.1 L843.5,501.1 L840.7,509.1 L837.9,517.1 L834.9,525.0 L831.9,532.9 L828.9,540.8 L825.7,548.6 L822.5,556.5 L819.2,564.2 L815.8,572.0 L812.3,579.7 L808.7,587.4M887.0,269.0 L878.6,268.0 L870.2,267.0 L861.8,266.1 L853.4,265.2 L844.9,264.4 L836.5,263.7 L828.1,263.0 L819.6,262.4 L811.2,261.9 L802.7,261.4 L794.3,260.9 L785.8,260.6 L777.4,260.3 L768.9,260.0 L760.5,259.8 L752.0,259.7 L743.5,259.6 L735.1,259.6 L726.6,259.7 L718.2,259.8 L709.7,260.0 L701.2,260.2 L692.8,260.5 L684.3,260.9 L675.9,261.3 L667.4,261.8 L659.0,262.3 L650.6,262.9 L642.1,263.6 L633.7,264.3 L625.3,265.1 L616.8,265.9 L608.4,266.8 L600.0,267.8 L591.6,268.8 L583.2,269.9 L574.8,271.1 L566.5,272.3 L558.1,273.5M887.0,269.0 L888.2,277.4 L889.4,285.7 L890.7,294.1 L892.1,302.5 L893.6,310.8 L895.1,319.1 L896.6,327.4 L898.3,335.7 L900.0,344.0 L901.8,352.3 L903.6,360.6 L905.5,368.8 L907.5,377.0 L909.5,385.2 L911.6,393.4 L913.8,401.6 L916.0,409.8 L918.3,417.9 L920.6,426.1 L923.1,434.2 L925.6,442.2 L928.1,450.3 L930.7,458.4 L933.4,466.4 L936.1,474.4 L938.9,482.4 L941.8,490.3 L944.7,498.3 L947.7,506.2 L950.8,514.1 L953.9,521.9 L957.1,529.8 L960.3,537.6 L963.7,545.4 L967.0,553.2 L970.4,560.9 L973.9,568.6 L977.5,576.3 L981.1,583.9M887.0,269.0 L885.5,277.3 L884.1,285.7 L882.9,294.0 L881.8,302.4 L880.8,310.8 L880.1,319.3 L879.4,327.7 L878.9,336.2 L878.6,344.6 L878.4,353.1 L878.3,361.5 L878.4,370.0 L878.7,378.4 L879.0,386.9 L879.6,395.3 L880.3,403.8 L881.1,412.2 L882.1,420.6 L883.2,429.0 L884.5,437.3 L885.9,445.7 L887.5,454.0 L889.2,462.3 L891.1,470.5 L893.1,478.8 L895.2,487.0 L897.5,495.1 L899.9,503.2 L902.5,511.3 L905.2,519.3 L908.1,527.2 L911.0,535.2 L914.2,543.0 L917.4,550.8 L920.8,558.6 L924.4,566.3 L928.0,573.9 L931.9,581.4 L935.8,588.9M887.0,269.0 L894.8,272.3 L902.8,275.1 L910.9,277.3 L919.2,279.0 L927.6,280.2 L936.0,280.7 L944.5,280.8 L952.9,280.2 L961.3,279.1 L969.6,277.5 L977.8,275.3 L985.8,272.5 L993.6,269.3 L1001.2,265.5 L1008.5,261.2 L1015.5,256.5 L1022.2,251.3 L1028.5,245.6 L1034.4,239.6 L1039.9,233.2 L1045.0,226.4 L1049.6,219.3 L1053.7,211.9 L1057.3,204.3 L1060.4,196.4 L1063.0,188.3 L1065.1,180.1 L1066.6,171.8 L1067.5,163.4 L1067.9,154.9 L1067.7,146.5 L1066.9,138.1 L1065.6,129.7 L1063.8,121.4 L1061.3,113.3 L1058.4,105.4 L1055.0,97.7 L1051.0,90.2 L1046.5,83.0M887.0,269.0 L890.9,276.5 L895.2,283.8 L899.7,290.9 L904.6,297.9 L909.7,304.6 L915.1,311.1 L920.8,317.4 L926.8,323.4 L932.9,329.2 L939.4,334.7 L946.0,339.9 L952.9,344.9 L959.9,349.5 L967.2,353.9 L974.6,357.9 L982.2,361.6 L990.0,365.1 L997.8,368.1 L1005.8,370.9 L1014.0,373.3 L1022.2,375.4 L1030.4,377.1 L1038.8,378.5 L1047.2,379.5 L1055.6,380.2 L1064.1,380.5 L1072.5,380.4 L1081.0,380.0 L1089.4,379.3 L1097.8,378.2 L1106.1,376.7 L1114.4,374.9 L1122.6,372.8 L1130.7,370.3 L1138.7,367.5 L1146.5,364.3 L1154.2,360.8 L1161.8,357.0 L1169.2,352.9M887.0,269.0 L894.0,273.8 L900.7,278.9 L907.2,284.4 L913.3,290.2 L919.2,296.2 L924.8,302.6 L930.1,309.2 L935.1,316.0 L939.7,323.1 L944.0,330.4 L947.9,337.9 L951.4,345.6 L954.6,353.5 L957.3,361.5 L959.7,369.6 L961.7,377.8 L963.3,386.1 L964.4,394.5 L965.2,402.9 L965.5,411.4 L965.5,419.8 L965.0,428.3 L964.1,436.7 L962.8,445.1 L961.1,453.4 L959.0,461.5 L956.5,469.6 L953.6,477.6 L950.3,485.4 L946.7,493.0 L942.6,500.5 L938.3,507.7 L933.5,514.7 L928.5,521.5 L923.1,528.0 L917.4,534.3 L911.4,540.2 L905.1,545.9 L898.6,551.3M887.0,269.0 L882.3,262.0 L877.5,255.0 L872.7,248.1 L867.7,241.2 L862.8,234.3 L857.7,227.6 L852.6,220.8 L847.4,214.1 L842.1,207.5 L836.8,201.0 L831.4,194.4 L825.9,188.0 L820.4,181.6 L814.8,175.2 L809.1,169.0 L803.4,162.7 L797.6,156.6 L791.7,150.4 L785.8,144.4 L779.8,138.4 L773.8,132.5 L767.7,126.6 L761.5,120.8 L755.3,115.1 L749.0,109.4 L742.7,103.8 L736.3,98.2 L729.9,92.8 L723.4,87.4 L716.8,82.0 L710.2,76.7 L703.5,71.5 L696.8,66.4 L690.0,61.3 L683.2,56.3 L676.3,51.4 L669.4,46.5 L662.4,41.7 L655.4,37.0M887.0,269.0 L879.9,264.4 L872.8,259.8 L865.8,255.0 L858.8,250.2 L851.9,245.3 L845.1,240.4 L838.3,235.3 L831.6,230.2 L824.9,225.0 L818.3,219.7 L811.8,214.3 L805.3,208.9 L798.9,203.3 L792.5,197.8 L786.2,192.1 L780.0,186.4 L773.9,180.5 L767.8,174.7 L761.8,168.7 L755.8,162.7 L749.9,156.6 L744.1,150.4 L738.4,144.2 L732.7,137.9 L727.2,131.6 L721.6,125.2 L716.2,118.7 L710.9,112.1 L705.6,105.5 L700.4,98.8 L695.2,92.1 L690.2,85.3 L685.2,78.5 L680.3,71.6 L675.5,64.6 L670.8,57.6 L666.1,50.5 L661.6,43.4 L657.1,36.2M887.0,269.0 L884.3,261.0 L881.4,253.0 L878.3,245.1 L875.0,237.4 L871.5,229.7 L867.8,222.0 L863.9,214.5 L859.8,207.1 L855.5,199.9 L851.0,192.7 L846.3,185.6 L841.5,178.7 L836.4,171.9 L831.2,165.3 L825.8,158.8 L820.2,152.4 L814.5,146.2 L808.6,140.1 L802.5,134.2 L796.3,128.5 L789.9,122.9 L783.4,117.5 L776.8,112.3 L770.0,107.2 L763.1,102.4 L756.0,97.7 L748.8,93.2 L741.6,88.9 L734.2,84.8 L726.7,80.8 L719.1,77.1 L711.4,73.6 L703.6,70.3 L695.7,67.2 L687.7,64.3 L679.7,61.7 L671.6,59.2 L663.5,57.0 L655.2,54.9M887.0,269.0 L878.6,270.0 L870.2,271.1 L861.8,272.4 L853.5,273.7 L845.2,275.2 L836.9,276.8 L828.6,278.6 L820.3,280.4 L812.1,282.4 L803.9,284.4 L795.7,286.6 L787.6,289.0 L779.5,291.4 L771.4,293.9 L763.4,296.6 L755.4,299.4 L747.4,302.3 L739.5,305.3 L731.7,308.4 L723.8,311.7 L716.1,315.0 L708.3,318.5 L700.7,322.0 L693.1,325.7 L685.5,329.5 L678.0,333.4 L670.5,337.4 L663.1,341.6 L655.8,345.8 L648.5,350.1 L641.3,354.5 L634.2,359.1 L627.1,363.7 L620.1,368.4 L613.2,373.3 L606.3,378.2 L599.5,383.3 L592.8,388.4 L586.1,393.6M887.0,269.0 L894.6,272.7 L902.3,276.2 L910.2,279.3 L918.1,282.2 L926.2,284.9 L934.3,287.2 L942.5,289.2 L950.8,291.0 L959.1,292.4 L967.5,293.6 L975.9,294.4 L984.4,295.0 L992.8,295.3 L1001.3,295.2 L1009.7,294.9 L1018.2,294.3 L1026.6,293.3 L1035.0,292.1 L1043.3,290.6 L1051.5,288.8 L1059.7,286.7 L1067.9,284.3 L1075.9,281.6 L1083.8,278.6 L1091.6,275.4 L1099.3,271.9 L1106.9,268.1 L1114.3,264.1 L1121.6,259.8 L1128.7,255.2 L1135.7,250.4 L1142.5,245.3 L1149.1,240.0 L1155.5,234.5 L1161.7,228.8 L1167.7,222.8 L1173.5,216.7 L1179.1,210.3 L1184.4,203.7M887.0,269.0 L889.3,260.9 L891.8,252.8 L894.3,244.7 L897.0,236.7 L899.7,228.7 L902.6,220.7 L905.6,212.8 L908.7,204.9 L911.9,197.1 L915.2,189.3 L918.7,181.6 L922.2,173.9 L925.8,166.2 L929.5,158.6 L933.4,151.1 L937.3,143.6 L941.4,136.2 L945.5,128.8 L949.8,121.5 L954.1,114.2 L958.5,107.0 L963.1,99.9 L967.7,92.8 L972.5,85.8 L977.3,78.9 L982.2,72.0 L987.3,65.2 L992.4,58.4 L997.6,51.8 L1002.9,45.2 L1008.3,38.6 L1013.7,32.2 L1019.3,25.8 L1025.0,19.5 L1030.7,13.3 L1036.5,7.2 L1042.4,1.1 L1048.4,-4.9 L1054.5,-10.8M887.0,269.0 L893.8,264.0 L900.6,259.0 L907.3,253.8 L914.0,248.6 L920.6,243.3 L927.1,237.9 L933.5,232.4 L939.9,226.8 L946.2,221.2 L952.4,215.5 L958.6,209.7 L964.7,203.8 L970.7,197.8 L976.7,191.8 L982.5,185.7 L988.3,179.5 L994.0,173.3 L999.7,167.0 L1005.2,160.6 L1010.7,154.2 L1016.1,147.6 L1021.4,141.0 L1026.6,134.4 L1031.8,127.7 L1036.8,120.9 L1041.8,114.0 L1046.7,107.1 L1051.5,100.2 L1056.2,93.1 L1060.8,86.1 L1065.4,78.9 L1069.8,71.7 L1074.2,64.5 L1078.4,57.1 L1082.6,49.8 L1086.7,42.4 L1090.7,34.9 L1094.5,27.4 L1098.3,19.8M887.0,269.0 L892.6,262.6 L898.2,256.3 L903.9,250.0 L909.6,243.8 L915.4,237.7 L921.3,231.6 L927.2,225.6 L933.2,219.6 L939.3,213.7 L945.4,207.8 L951.6,202.0 L957.8,196.3 L964.1,190.6 L970.4,185.0 L976.8,179.4 L983.2,173.9 L989.7,168.5 L996.3,163.2 L1002.9,157.9 L1009.5,152.6 L1016.2,147.5 L1023.0,142.4 L1029.8,137.3 L1036.6,132.4 L1043.5,127.5 L1050.5,122.6 L1057.4,117.9 L1064.5,113.2 L1071.6,108.6 L1078.7,104.0 L1085.9,99.5 L1093.1,95.1 L1100.4,90.8 L1107.7,86.5 L1115.0,82.3 L1122.4,78.2 L1129.8,74.1 L1137.3,70.1 L1144.8,66.2M887.0,269.0 L881.2,275.1 L875.9,281.8 L871.4,288.9 L867.6,296.4 L864.5,304.3 L862.2,312.5 L860.7,320.8 L860.0,329.2 L860.2,337.7 L861.2,346.1 L863.0,354.3 L865.6,362.4 L868.9,370.2 L873.0,377.5 L877.9,384.5 L883.3,391.0 L889.4,396.9 L896.0,402.1 L903.1,406.7 L910.6,410.6 L918.5,413.7 L926.6,416.1 L934.9,417.7 L943.3,418.4 L951.8,418.3 L960.2,417.4 L968.5,415.6 L976.6,413.1 L984.3,409.8 L991.8,405.8 L998.8,401.0 L1005.3,395.6 L1011.2,389.6 L1016.5,383.0 L1021.2,375.9 L1025.1,368.4 L1028.3,360.6 L1030.7,352.5 L1032.3,344.2M887.0,269.0 L881.6,262.5 L876.3,255.9 L871.0,249.3 L865.7,242.7 L860.5,236.0 L855.4,229.3 L850.3,222.5 L845.3,215.7 L840.3,208.9 L835.4,202.0 L830.5,195.1 L825.7,188.1 L820.9,181.1 L816.2,174.1 L811.6,167.0 L807.0,159.9 L802.4,152.8 L797.9,145.6 L793.5,138.4 L789.1,131.1 L784.8,123.9 L780.5,116.6 L776.3,109.2 L772.2,101.9 L768.1,94.4 L764.1,87.0 L760.1,79.5 L756.2,72.0 L752.3,64.5 L748.5,57.0 L744.7,49.4 L741.1,41.8 L737.4,34.1 L733.9,26.4 L730.4,18.7 L726.9,11.0 L723.5,3.3 L720.2,-4.5 L716.9,-12.3M887.0,269.0 L880.5,274.4 L874.0,279.8 L867.4,285.1 L860.7,290.3 L854.0,295.4 L847.2,300.5 L840.4,305.5 L833.5,310.5 L826.6,315.4 L819.6,320.2 L812.6,324.9 L805.6,329.5 L798.5,334.1 L791.3,338.6 L784.1,343.1 L776.8,347.4 L769.5,351.7 L762.2,355.9 L754.8,360.1 L747.4,364.1 L739.9,368.1 L732.4,372.0 L724.9,375.8 L717.3,379.6 L709.7,383.3 L702.0,386.9 L694.3,390.4 L686.6,393.8 L678.8,397.2 L671.0,400.5 L663.2,403.6 L655.3,406.8 L647.4,409.8 L639.5,412.7 L631.5,415.6 L623.5,418.4 L615.5,421.1 L607.5,423.7 L599.4,426.3M887.0,269.0 L878.8,271.2 L870.7,273.7 L862.8,276.5 L855.0,279.8 L847.3,283.3 L839.8,287.3 L832.5,291.5 L825.3,296.1 L818.4,300.9 L811.7,306.1 L805.3,311.6 L799.1,317.4 L793.2,323.4 L787.5,329.7 L782.1,336.2 L777.1,343.0 L772.3,350.0 L767.9,357.2 L763.7,364.6 L759.9,372.1 L756.5,379.9 L753.4,387.7 L750.7,395.7 L748.3,403.9 L746.2,412.1 L744.6,420.4 L743.3,428.7 L742.4,437.2 L741.9,445.6 L741.8,454.1 L742.0,462.5 L742.6,471.0 L743.6,479.4 L744.9,487.7 L746.7,496.0 L748.8,504.2 L751.2,512.3 L754.1,520.3 L757.2,528.1M887.0,269.0 L884.3,277.0 L882.6,285.3 L881.7,293.7 L881.9,302.2 L883.0,310.6 L885.0,318.8 L887.9,326.7 L891.7,334.3 L896.3,341.3 L901.7,347.8 L907.8,353.7 L914.5,358.9 L921.8,363.2 L929.5,366.7 L937.5,369.4 L945.8,371.1 L954.2,371.8 L962.7,371.7 L971.1,370.5 L979.3,368.5 L987.2,365.5 L994.7,361.6 L1001.7,357.0 L1008.2,351.5 L1014.1,345.4 L1019.2,338.7 L1023.5,331.4 L1026.9,323.7 L1029.5,315.6 L1031.2,307.3 L1031.9,298.9 L1031.7,290.4 L1030.5,282.1 L1028.4,273.9 L1025.3,266.0 L1021.5,258.5 L1016.7,251.5 L1011.3,245.0 L1005.1,239.2M887.0,269.0 L878.5,269.1 L870.1,269.2 L861.6,269.2 L853.2,269.1 L844.7,268.9 L836.2,268.7 L827.8,268.5 L819.3,268.1 L810.9,267.7 L802.4,267.3 L794.0,266.8 L785.5,266.2 L777.1,265.5 L768.7,264.8 L760.2,264.1 L751.8,263.2 L743.4,262.3 L735.0,261.4 L726.6,260.3 L718.2,259.2 L709.8,258.1 L701.5,256.9 L693.1,255.6 L684.7,254.3 L676.4,252.9 L668.1,251.4 L659.7,249.9 L651.4,248.3 L643.1,246.6 L634.8,244.9 L626.6,243.1 L618.3,241.3 L610.1,239.4 L601.8,237.4 L593.6,235.4 L585.4,233.3 L577.2,231.2 L569.1,229.0 L560.9,226.7M887.0,269.0 L893.5,263.6 L899.6,257.7 L905.1,251.3 L910.1,244.5 L914.5,237.3 L918.3,229.7 L921.5,221.9 L924.1,213.8 L925.9,205.6 L927.1,197.2 L927.6,188.7 L927.3,180.3 L926.4,171.9 L924.8,163.6 L922.6,155.4 L919.6,147.5 L916.1,139.8 L911.9,132.5 L907.1,125.5 L901.8,118.9 L895.9,112.8 L889.6,107.2 L882.8,102.2 L875.6,97.7 L868.1,93.8 L860.3,90.5 L852.2,87.9 L844.0,86.0 L835.6,84.8 L827.2,84.2 L818.7,84.3 L810.3,85.2 L802.0,86.7 L793.8,88.9 L785.9,91.7 L778.2,95.2 L770.8,99.4 L763.8,104.1 L757.1,109.4M887.0,269.0 L878.6,268.0 L870.2,266.8 L861.9,265.5 L853.5,264.2 L845.2,262.7 L836.9,261.0 L828.6,259.3 L820.3,257.5 L812.1,255.5 L803.9,253.4 L795.7,251.2 L787.6,248.9 L779.5,246.5 L771.4,244.0 L763.4,241.4 L755.4,238.6 L747.4,235.7 L739.5,232.8 L731.6,229.7 L723.8,226.5 L716.0,223.2 L708.2,219.8 L700.5,216.3 L692.9,212.7 L685.3,208.9 L677.7,205.1 L670.3,201.1 L662.8,197.1 L655.4,193.0 L648.1,188.7 L640.9,184.4 L633.7,179.9 L626.5,175.4 L619.5,170.7 L612.5,166.0 L605.5,161.1 L598.6,156.2 L591.8,151.2 L585.1,146.0M887.0,269.0 L878.5,268.9 L870.1,268.3 L861.7,267.3 L853.4,265.9 L845.1,264.0 L837.0,261.7 L829.0,259.0 L821.1,255.9 L813.4,252.3 L805.9,248.4 L798.6,244.1 L791.6,239.4 L784.8,234.4 L778.3,229.0 L772.0,223.3 L766.1,217.2 L760.5,210.9 L755.2,204.3 L750.3,197.4 L745.7,190.3 L741.5,182.9 L737.7,175.4 L734.3,167.6 L731.3,159.7 L728.7,151.7 L726.6,143.5 L724.8,135.2 L723.5,126.9 L722.7,118.4 L722.2,110.0 L722.2,101.5 L722.7,93.1 L723.6,84.7 L724.9,76.3 L726.6,68.0 L728.8,59.9 L731.4,51.8 L734.4,43.9 L737.8,36.2M887.0,269.0 L889.8,277.0 L892.9,284.9 L896.3,292.6 L899.9,300.3 L903.7,307.8 L907.8,315.2 L912.1,322.5 L916.7,329.6 L921.5,336.6 L926.6,343.3 L931.8,350.0 L937.3,356.4 L943.0,362.7 L948.9,368.8 L955.0,374.6 L961.3,380.3 L967.8,385.7 L974.4,391.0 L981.2,396.0 L988.2,400.8 L995.3,405.3 L1002.6,409.6 L1010.0,413.7 L1017.6,417.5 L1025.2,421.1 L1033.0,424.4 L1040.9,427.5 L1048.9,430.3 L1057.0,432.8 L1065.1,435.0 L1073.4,437.0 L1081.7,438.7 L1090.0,440.2 L1098.4,441.3 L1106.8,442.2 L1115.2,442.8 L1123.7,443.1 L1132.1,443.2 L1140.6,442.9M887.0,269.0 L893.3,263.3 L899.8,258.0 L906.6,252.9 L913.5,248.0 L920.7,243.5 L928.0,239.3 L935.5,235.3 L943.1,231.7 L950.9,228.4 L958.8,225.4 L966.9,222.8 L975.0,220.5 L983.3,218.5 L991.6,216.9 L999.9,215.6 L1008.3,214.7 L1016.8,214.1 L1025.2,213.9 L1033.7,214.0 L1042.1,214.5 L1050.6,215.3 L1058.9,216.5 L1067.3,218.0 L1075.5,219.9 L1083.7,222.1 L1091.8,224.6 L1099.7,227.5 L1107.5,230.7 L1115.2,234.2 L1122.8,238.1 L1130.2,242.2 L1137.4,246.7 L1144.4,251.4 L1151.2,256.4 L1157.8,261.7 L1164.1,267.3 L1170.2,273.1 L1176.1,279.2 L1181.8,285.5M887.0,269.0 L889.3,277.1 L892.1,285.1 L895.4,292.9 L899.0,300.6 L903.1,308.0 L907.6,315.1 L912.5,322.0 L917.8,328.6 L923.4,335.0 L929.4,340.9 L935.7,346.6 L942.3,351.8 L949.2,356.7 L956.4,361.2 L963.8,365.3 L971.4,369.0 L979.3,372.2 L987.2,375.0 L995.4,377.4 L1003.6,379.2 L1012.0,380.6 L1020.4,381.6 L1028.8,382.0 L1037.3,382.0 L1045.7,381.6 L1054.1,380.6 L1062.5,379.2 L1070.7,377.3 L1078.8,374.9 L1086.8,372.1 L1094.6,368.9 L1102.3,365.2 L1109.7,361.1 L1116.8,356.6 L1123.7,351.7 L1130.3,346.4 L1136.6,340.7 L1142.6,334.7 L1148.2,328.4M887.0,269.0 L884.9,260.8 L882.7,252.6 L880.3,244.5 L877.8,236.4 L875.2,228.4 L872.5,220.4 L869.6,212.4 L866.7,204.5 L863.6,196.6 L860.4,188.8 L857.0,181.0 L853.6,173.3 L850.0,165.6 L846.3,158.0 L842.5,150.4 L838.6,142.9 L834.5,135.5 L830.4,128.1 L826.1,120.8 L821.7,113.6 L817.2,106.4 L812.6,99.3 L807.9,92.3 L803.1,85.3 L798.2,78.5 L793.1,71.7 L788.0,64.9 L782.8,58.3 L777.4,51.7 L772.0,45.2 L766.4,38.8 L760.8,32.5 L755.1,26.3 L749.2,20.2 L743.3,14.1 L737.3,8.2 L731.2,2.3 L725.0,-3.4 L718.7,-9.1M887.0,269.0 L893.3,274.6 L899.5,280.4 L905.5,286.4 L911.3,292.5 L916.9,298.8 L922.4,305.3 L927.6,312.0 L932.6,318.8 L937.5,325.7 L942.1,332.8 L946.5,340.0 L950.7,347.4 L954.7,354.9 L958.4,362.4 L961.9,370.1 L965.2,377.9 L968.2,385.8 L971.1,393.8 L973.6,401.9 L976.0,410.0 L978.0,418.2 L979.9,426.5 L981.5,434.8 L982.8,443.1 L983.9,451.5 L984.7,459.9 L985.3,468.4 L985.6,476.8 L985.7,485.3 L985.6,493.8 L985.1,502.2 L984.5,510.6 L983.5,519.1 L982.3,527.4 L980.9,535.8 L979.2,544.1 L977.3,552.3 L975.1,560.5 L972.7,568.6M887.0,269.0 L880.6,274.6 L874.1,279.9 L867.3,285.0 L860.3,289.8 L853.2,294.4 L845.9,298.6 L838.5,302.6 L830.9,306.4 L823.1,309.8 L815.3,312.9 L807.3,315.8 L799.2,318.3 L791.1,320.5 L782.8,322.5 L774.5,324.1 L766.2,325.4 L757.8,326.4 L749.3,327.0 L740.9,327.4 L732.4,327.4 L724.0,327.1 L715.5,326.5 L707.1,325.6 L698.7,324.3 L690.4,322.8 L682.2,320.9 L674.0,318.7 L665.9,316.2 L657.9,313.5 L650.0,310.4 L642.3,307.0 L634.7,303.3 L627.2,299.4 L619.9,295.1 L612.7,290.6 L605.7,285.8 L598.9,280.8 L592.3,275.5 L585.9,270.0" fill="none" stroke="#ff00ff" stroke-width="1" shape-rendering="crispEdges"/><text x="784.0" y="157" text-anchor="middle" fill="#d4d4d4" font-family="Liberation Sans, sans-serif" font-size="11.5">−100</text><text x="784.0" y="389" text-anchor="middle" fill="#d4d4d4" font-family="Liberation Sans, sans-serif" font-size="11.5">−100</text><text x="835.5" y="157" text-anchor="middle" fill="#d4d4d4" font-family="Liberation Sans, sans-serif" font-size="11.5">−50</text><text x="835.5" y="389" text-anchor="middle" fill="#d4d4d4" font-family="Liberation Sans, sans-serif" font-size="11.5">−50</text><text x="887.0" y="157" text-anchor="middle" fill="#d4d4d4" font-family="Liberation Sans, sans-serif" font-size="11.5">0</text><text x="887.0" y="389" text-anchor="middle" fill="#d4d4d4" font-family="Liberation Sans, sans-serif" font-size="11.5">0</text><text x="938.5" y="157" text-anchor="middle" fill="#d4d4d4" font-family="Liberation Sans, sans-serif" font-size="11.5">50</text><text x="938.5" y="389" text-anchor="middle" fill="#d4d4d4" font-family="Liberation Sans, sans-serif" font-size="11.5">50</text><text x="990.0" y="157" text-anchor="middle" fill="#d4d4d4" font-family="Liberation Sans, sans-serif" font-size="11.5">100</text><text x="990.0" y="389" text-anchor="middle" fill="#d4d4d4" font-family="Liberation Sans, sans-serif" font-size="11.5">100</text><text x="710.5" y="170.0" text-anchor="start" fill="#d4d4d4" font-family="Liberation Sans, sans-serif" font-size="11.5">100</text><text x="1064" y="170.0" text-anchor="end" fill="#d4d4d4" font-family="Liberation Sans, sans-serif" font-size="11.5">100</text><text x="710.5" y="221.5" text-anchor="start" fill="#d4d4d4" font-family="Liberation Sans, sans-serif" font-size="11.5">50</text><text x="1064" y="221.5" text-anchor="end" fill="#d4d4d4" font-family="Liberation Sans, sans-serif" font-size="11.5">50</text><text x="710.5" y="273.0" text-anchor="start" fill="#d4d4d4" font-family="Liberation Sans, sans-serif" font-size="11.5">0</text><text x="1064" y="273.0" text-anchor="end" fill="#d4d4d4" font-family="Liberation Sans, sans-serif" font-size="11.5">0</text><text x="710.5" y="324.5" text-anchor="start" fill="#d4d4d4" font-family="Liberation Sans, sans-serif" font-size="11.5">−50</text><text x="1064" y="324.5" text-anchor="end" fill="#d4d4d4" font-family="Liberation Sans, sans-serif" font-size="11.5">−50</text><text x="710.5" y="376.0" text-anchor="start" fill="#d4d4d4" font-family="Liberation Sans, sans-serif" font-size="11.5">−100</text><text x="1064" y="376.0" text-anchor="end" fill="#d4d4d4" font-family="Liberation Sans, sans-serif" font-size="11.5">−100</text><path d="M737.6,138v3M737.6,401v-3M742.8,138v3M742.8,401v-3M748.0,138v3M748.0,401v-3M753.1,138v3M753.1,401v-3M758.2,138v3M758.2,401v-3M763.4,138v3M763.4,401v-3M768.5,138v3M768.5,401v-3M773.7,138v3M773.7,401v-3M778.9,138v3M778.9,401v-3M784.0,138v6M784.0,401v-6M789.1,138v3M789.1,401v-3M794.3,138v3M794.3,401v-3M799.5,138v3M799.5,401v-3M804.6,138v3M804.6,401v-3M809.8,138v3M809.8,401v-3M814.9,138v3M814.9,401v-3M820.0,138v3M820.0,401v-3M825.2,138v3M825.2,401v-3M830.4,138v3M830.4,401v-3M835.5,138v6M835.5,401v-6M840.6,138v3M840.6,401v-3M845.8,138v3M845.8,401v-3M851.0,138v3M851.0,401v-3M856.1,138v3M856.1,401v-3M861.2,138v3M861.2,401v-3M866.4,138v3M866.4,401v-3M871.5,138v3M871.5,401v-3M876.7,138v3M876.7,401v-3M881.9,138v3M881.9,401v-3M887.0,138v6M887.0,401v-6M892.1,138v3M892.1,401v-3M897.3,138v3M897.3,401v-3M902.5,138v3M902.5,401v-3M907.6,138v3M907.6,401v-3M912.8,138v3M912.8,401v-3M917.9,138v3M917.9,401v-3M923.0,138v3M923.0,401v-3M928.2,138v3M928.2,401v-3M933.4,138v3M933.4,401v-3M938.5,138v6M938.5,401v-6M943.6,138v3M943.6,401v-3M948.8,138v3M948.8,401v-3M954.0,138v3M954.0,401v-3M959.1,138v3M959.1,401v-3M964.2,138v3M964.2,401v-3M969.4,138v3M969.4,401v-3M974.5,138v3M974.5,401v-3M979.7,138v3M979.7,401v-3M984.9,138v3M984.9,401v-3M990.0,138v6M990.0,401v-6M995.1,138v3M995.1,401v-3M1000.3,138v3M1000.3,401v-3M1005.5,138v3M1005.5,401v-3M1010.6,138v3M1010.6,401v-3M1015.8,138v3M1015.8,401v-3M1020.9,138v3M1020.9,401v-3M1026.0,138v3M1026.0,401v-3M1031.2,138v3M1031.2,401v-3M1036.3,138v3M1036.3,401v-3M698,372.0h6M1076,372.0h-6M698,366.9h3M1076,366.9h-3M698,361.7h3M1076,361.7h-3M698,356.6h3M1076,356.6h-3M698,351.4h3M1076,351.4h-3M698,346.2h3M1076,346.2h-3M698,341.1h3M1076,341.1h-3M698,335.9h3M1076,335.9h-3M698,330.8h3M1076,330.8h-3M698,325.6h3M1076,325.6h-3M698,320.5h6M1076,320.5h-6M698,315.4h3M1076,315.4h-3M698,310.2h3M1076,310.2h-3M698,305.1h3M1076,305.1h-3M698,299.9h3M1076,299.9h-3M698,294.8h3M1076,294.8h-3M698,289.6h3M1076,289.6h-3M698,284.4h3M1076,284.4h-3M698,279.3h3M1076,279.3h-3M698,274.1h3M1076,274.1h-3M698,269.0h6M1076,269.0h-6M698,263.9h3M1076,263.9h-3M698,258.7h3M1076,258.7h-3M698,253.6h3M1076,253.6h-3M698,248.4h3M1076,248.4h-3M698,243.2h3M1076,243.2h-3M698,238.1h3M1076,238.1h-3M698,232.9h3M1076,232.9h-3M698,227.8h3M1076,227.8h-3M698,222.7h3M1076,222.7h-3M698,217.5h6M1076,217.5h-6M698,212.3h3M1076,212.3h-3M698,207.2h3M1076,207.2h-3M698,202.1h3M1076,202.1h-3M698,196.9h3M1076,196.9h-3M698,191.8h3M1076,191.8h-3M698,186.6h3M1076,186.6h-3M698,181.4h3M1076,181.4h-3M698,176.3h3M1076,176.3h-3M698,171.1h3M1076,171.1h-3M698,166.0h6M1076,166.0h-6M698.5,162.9V375.1M1075.5,162.9V375.1M736.6,138.5H1037.4M736.6,400.5H1037.4" stroke="#d0d0d0" stroke-width="1" fill="none" shape-rendering="crispEdges"/></svg><div class="a" style="left:698px;top:401px;width:378px;height:3px;background:#e8e8e8;"></div><svg style="left:830px;top:397px" width="115" height="8" viewBox="830 397 115 8"><path d="M834.5,399.5 L837.5,402.5 L840.5,399.5 M934.5,399.5 L937.5,402.5 L940.5,399.5" stroke="#000" stroke-width="1.3" fill="none"/></svg><div class="a" style="left:844px;top:402px;width:88px;height:1px;background:repeating-linear-gradient(90deg,#8a8a8a 0 1px,transparent 1px 3px)"></div><div class="a" style="left:698px;top:405px;width:34px;height:21px;background:#e8e8e8;border-top:1px solid #fff;border-left:1px solid #fff;border-right:1px solid #999;border-bottom:1px solid #999"></div><div class="t" style="left:702px;top:408px;font-size:12.6px;color:#000;">Hide</div><div class="a" style="left:732px;top:405px;width:294px;height:21px;background:#e8e8e8;border-top:1px solid #fff;border-left:1px solid #fff;border-right:1px solid #999;border-bottom:1px solid #999"></div><div class="t" style="left:846.7px;top:408px;font-size:12.6px;color:#000;letter-spacing:0.2px">RhoZ View</div><div class="a" style="left:1026px;top:405px;width:50px;height:21px;background:#e8e8e8;border-top:1px solid #fff;border-left:1px solid #fff;border-right:1px solid #999;border-bottom:1px solid #999"></div><div class="t" style="left:1029.5px;top:408px;font-size:12.6px;color:#000;letter-spacing:0.3px">Actions</div><div class="a" style="left:698px;top:427px;width:378px;height:1px;background:#fff"></div><div class="a" style="left:699px;top:428px;width:377px;height:2px;background:#7c9dc0;"></div><div class="a" style="left:698px;top:430px;width:378px;height:1px;background:#999"></div><svg style="left:698px;top:432px" width="378" height="263" viewBox="698 432 378 263"><rect x="698" y="432" width="378" height="263" fill="#2e4449"/><rect x="698" y="484" width="378" height="158" fill="#000"/><rect x="828" y="515" width="117" height="3" fill="#514f8a"/><rect x="828" y="609.0" width="117" height="3" fill="#514f8a"/><rect x="836" y="518" width="101" height="7" fill="#514f8a"/><rect x="836" y="602.0" width="101" height="7" fill="#514f8a"/><rect x="852" y="535" width="70" height="3" fill="#5b8f64"/><rect x="852" y="589.0" width="70" height="3" fill="#5b8f64"/><rect x="859" y="538" width="56" height="10" fill="#5b8f64"/><rect x="859" y="579.0" width="56" height="10" fill="#5b8f64"/><rect x="861" y="556" width="52" height="3" fill="#9a5a6a"/><rect x="861" y="568.0" width="52" height="3" fill="#9a5a6a"/><path d="M887.5,432V484M887.5,642V695" stroke="#000" stroke-width="2"/><path d="M887.5,563.5L1031.8,826.5M887.5,563.5L1084.9,789.4M887.5,563.5L1092.8,344.8M887.5,563.5L963.4,853.7M887.5,563.5L925.1,265.9M887.5,563.5L777.7,284.3M887.5,563.5L723.4,814.7M887.5,563.5L947.0,857.5M887.5,563.5L1064.6,321.3M887.5,563.5L1106.9,358.9M887.5,563.5L1099.4,775.8M887.5,563.5L743.2,826.5M887.5,563.5L1101.3,774.0M887.5,563.5L817.4,855.2M887.5,563.5L685.4,341.8M887.5,563.5L663.3,364.2M887.5,563.5L792.3,848.0M887.5,563.5L795.1,848.9M887.5,563.5L682.3,344.6M887.5,563.5L1011.1,836.9M887.5,563.5L1028.5,828.3M887.5,563.5L665.2,362.1M887.5,563.5L1097.2,348.9M887.5,563.5L1087.7,340.0M887.5,563.5L814.2,854.4M887.5,563.5L702.1,799.3M887.5,563.5L1059.7,809.1M887.5,563.5L953.1,270.8M887.5,563.5L943.7,268.8M887.5,563.5L1085.6,788.8M887.5,563.5L795.6,849.1M887.5,563.5L718.9,315.4M887.5,563.5L902.5,863.1M887.5,563.5L839.7,859.7M887.5,563.5L1045.5,308.5M887.5,563.5L681.8,345.1M887.5,563.5L884.2,863.5M887.5,563.5L1002.6,840.5M887.5,563.5L1028.6,828.3M887.5,563.5L719.0,315.3M887.5,563.5L863.6,862.5M887.5,563.5L911.6,862.5M887.5,563.5L881.5,863.4M887.5,563.5L783.1,844.8M887.5,563.5L825.2,270.0M887.5,563.5L814.3,854.4M887.5,563.5L774.3,285.7M887.5,563.5L812.5,854.0M887.5,563.5L1022.7,295.7M887.5,563.5L1015.7,834.7M887.5,563.5L778.3,284.1M887.5,563.5L983.2,279.2M887.5,563.5L818.2,271.6M887.5,563.5L764.1,290.0M887.5,563.5L1041.3,821.1M887.5,563.5L810.8,853.5M887.5,563.5L1046.3,818.0M887.5,563.5L793.3,278.7M887.5,563.5L1104.7,770.5M887.5,563.5L902.5,863.1M1012.8,478.9l-0.7,42.3M975.6,653.6l8.4,-39.5M867.3,676.2l8.2,-40.9M729.7,653.0l-1.8,-41.3M960.1,463.5l-13.7,36.8M739.0,438.7l-5.5,29.5M732.5,455.3l-3.6,40.3M803.2,690.2l-15.0,-35.1M863.5,437.8l9.9,34.3M934.7,436.7l1.4,33.5M1055.4,685.9l-2.4,-45.3M849.3,652.1l2.9,-39.1M1058.8,675.4l-4.5,-47.3M757.8,460.3l3.5,28.5M1031.9,663.8l-2.0,-30.7M1060.4,451.0l13.8,47.8M810.9,694.0l-0.1,-35.4M1064.5,456.6l-6.4,36.9M937.6,454.2l-6.2,44.5M724.6,671.6l-6.8,-48.4M806.0,658.4l-10.4,-49.7M932.8,455.7l4.3,40.1M761.4,683.0l-6.0,-38.3M823.9,458.5l-1.1,34.0M926.8,646.8l-7.4,-36.4M1030.8,672.3l-14.6,-44.5M921.5,467.4l4.0,37.0M854.9,664.6l10.6,-29.9M1010.5,435.3l10.1,42.4M820.2,471.0l12.3,28.6" fill="none" stroke="#ff00ff" stroke-width="1" shape-rendering="crispEdges"/><text x="784.5" y="451" text-anchor="middle" fill="#d4d4d4" font-family="Liberation Sans, sans-serif" font-size="11.5">−100</text><text x="784.5" y="683" text-anchor="middle" fill="#d4d4d4" font-family="Liberation Sans, sans-serif" font-size="11.5">−100</text><text x="836.0" y="451" text-anchor="middle" fill="#d4d4d4" font-family="Liberation Sans, sans-serif" font-size="11.5">−50</text><text x="836.0" y="683" text-anchor="middle" fill="#d4d4d4" font-family="Liberation Sans, sans-serif" font-size="11.5">−50</text><text x="887.5" y="451" text-anchor="middle" fill="#d4d4d4" font-family="Liberation Sans, sans-serif" font-size="11.5">0</text><text x="887.5" y="683" text-anchor="middle" fill="#d4d4d4" font-family="Liberation Sans, sans-serif" font-size="11.5">0</text><text x="939.0" y="451" text-anchor="middle" fill="#d4d4d4" font-family="Liberation Sans, sans-serif" font-size="11.5">50</text><text x="939.0" y="683" text-anchor="middle" fill="#d4d4d4" font-family="Liberation Sans, sans-serif" font-size="11.5">50</text><text x="990.5" y="451" text-anchor="middle" fill="#d4d4d4" font-family="Liberation Sans, sans-serif" font-size="11.5">100</text><text x="990.5" y="683" text-anchor="middle" fill="#d4d4d4" font-family="Liberation Sans, sans-serif" font-size="11.5">100</text><text x="710.5" y="464.5" text-anchor="start" fill="#d4d4d4" font-family="Liberation Sans, sans-serif" font-size="11.5">100</text><text x="1064" y="464.5" text-anchor="end" fill="#d4d4d4" font-family="Liberation Sans, sans-serif" font-size="11.5">100</text><text x="710.5" y="516.0" text-anchor="start" fill="#d4d4d4" font-family="Liberation Sans, sans-serif" font-size="11.5">50</text><text x="1064" y="516.0" text-anchor="end" fill="#d4d4d4" font-family="Liberation Sans, sans-serif" font-size="11.5">50</text><text x="710.5" y="567.5" text-anchor="start" fill="#d4d4d4" font-family="Liberation Sans, sans-serif" font-size="11.5">0</text><text x="1064" y="567.5" text-anchor="end" fill="#d4d4d4" font-family="Liberation Sans, sans-serif" font-size="11.5">0</text><text x="710.5" y="619.0" text-anchor="start" fill="#d4d4d4" font-family="Liberation Sans, sans-serif" font-size="11.5">−50</text><text x="1064" y="619.0" text-anchor="end" fill="#d4d4d4" font-family="Liberation Sans, sans-serif" font-size="11.5">−50</text><text x="710.5" y="670.5" text-anchor="start" fill="#d4d4d4" font-family="Liberation Sans, sans-serif" font-size="11.5">−100</text><text x="1064" y="670.5" text-anchor="end" fill="#d4d4d4" font-family="Liberation Sans, sans-serif" font-size="11.5">−100</text><path d="M738.1,432v3M738.1,695v-3M743.3,432v3M743.3,695v-3M748.5,432v3M748.5,695v-3M753.6,432v3M753.6,695v-3M758.8,432v3M758.8,695v-3M763.9,432v3M763.9,695v-3M769.0,432v3M769.0,695v-3M774.2,432v3M774.2,695v-3M779.4,432v3M779.4,695v-3M784.5,432v6M784.5,695v-6M789.6,432v3M789.6,695v-3M794.8,432v3M794.8,695v-3M800.0,432v3M800.0,695v-3M805.1,432v3M805.1,695v-3M810.2,432v3M810.2,695v-3M815.4,432v3M815.4,695v-3M820.5,432v3M820.5,695v-3M825.7,432v3M825.7,695v-3M830.9,432v3M830.9,695v-3M836.0,432v6M836.0,695v-6M841.1,432v3M841.1,695v-3M846.3,432v3M846.3,695v-3M851.5,432v3M851.5,695v-3M856.6,432v3M856.6,695v-3M861.8,432v3M861.8,695v-3M866.9,432v3M866.9,695v-3M872.0,432v3M872.0,695v-3M877.2,432v3M877.2,695v-3M882.4,432v3M882.4,695v-3M887.5,432v6M887.5,695v-6M892.6,432v3M892.6,695v-3M897.8,432v3M897.8,695v-3M903.0,432v3M903.0,695v-3M908.1,432v3M908.1,695v-3M913.2,432v3M913.2,695v-3M918.4,432v3M918.4,695v-3M923.5,432v3M923.5,695v-3M928.7,432v3M928.7,695v-3M933.9,432v3M933.9,695v-3M939.0,432v6M939.0,695v-6M944.1,432v3M944.1,695v-3M949.3,432v3M949.3,695v-3M954.5,432v3M954.5,695v-3M959.6,432v3M959.6,695v-3M964.8,432v3M964.8,695v-3M969.9,432v3M969.9,695v-3M975.0,432v3M975.0,695v-3M980.2,432v3M980.2,695v-3M985.4,432v3M985.4,695v-3M990.5,432v6M990.5,695v-6M995.6,432v3M995.6,695v-3M1000.8,432v3M1000.8,695v-3M1006.0,432v3M1006.0,695v-3M1011.1,432v3M1011.1,695v-3M1016.2,432v3M1016.2,695v-3M1021.4,432v3M1021.4,695v-3M1026.5,432v3M1026.5,695v-3M1031.7,432v3M1031.7,695v-3M1036.8,432v3M1036.8,695v-3M698,666.5h6M1076,666.5h-6M698,661.4h3M1076,661.4h-3M698,656.2h3M1076,656.2h-3M698,651.0h3M1076,651.0h-3M698,645.9h3M1076,645.9h-3M698,640.8h3M1076,640.8h-3M698,635.6h3M1076,635.6h-3M698,630.5h3M1076,630.5h-3M698,625.3h3M1076,625.3h-3M698,620.1h3M1076,620.1h-3M698,615.0h6M1076,615.0h-6M698,609.9h3M1076,609.9h-3M698,604.7h3M1076,604.7h-3M698,599.5h3M1076,599.5h-3M698,594.4h3M1076,594.4h-3M698,589.2h3M1076,589.2h-3M698,584.1h3M1076,584.1h-3M698,579.0h3M1076,579.0h-3M698,573.8h3M1076,573.8h-3M698,568.6h3M1076,568.6h-3M698,563.5h6M1076,563.5h-6M698,558.4h3M1076,558.4h-3M698,553.2h3M1076,553.2h-3M698,548.0h3M1076,548.0h-3M698,542.9h3M1076,542.9h-3M698,537.8h3M1076,537.8h-3M698,532.6h3M1076,532.6h-3M698,527.5h3M1076,527.5h-3M698,522.3h3M1076,522.3h-3M698,517.1h3M1076,517.1h-3M698,512.0h6M1076,512.0h-6M698,506.9h3M1076,506.9h-3M698,501.7h3M1076,501.7h-3M698,496.6h3M1076,496.6h-3M698,491.4h3M1076,491.4h-3M698,486.2h3M1076,486.2h-3M698,481.1h3M1076,481.1h-3M698,475.9h3M1076,475.9h-3M698,470.8h3M1076,470.8h-3M698,465.6h3M1076,465.6h-3M698,460.5h6M1076,460.5h-6M698.5,457.4V669.6M1075.5,457.4V669.6M737.1,432.5H1037.9M737.1,694.5H1037.9" stroke="#d0d0d0" stroke-width="1" fill="none" shape-rendering="crispEdges"/></svg><svg style="left:638px;top:696px" width="115" height="8" viewBox="638 696 115 8"><path d="M643.5,699.5 L646.5,702.5 L649.5,699.5 M743.5,699.5 L746.5,702.5 L749.5,699.5" stroke="#000" stroke-width="1.3" fill="none"/></svg><div class="a" style="left:653px;top:701px;width:88px;height:1px;background:repeating-linear-gradient(90deg,#8a8a8a 0 1px,transparent 1px 3px)"></div><div class="a" style="left:315px;top:705px;width:70px;height:21px;background:#e8e8e8;border-top:1px solid #fff;border-left:1px solid #fff;border-right:1px solid #999;border-top-left-radius:2px"></div><div class="t" style="left:319.3px;top:708px;font-size:12.6px;color:#000;">Command</div><div class="a" style="left:314px;top:725px;width:1px;height:1px;background:#fff"></div><div class="a" style="left:314px;top:705px;width:1px;height:95px;background:#fff"></div><div class="a" style="left:385px;top:725px;width:692px;height:1px;background:#fff"></div><div class="a" style="left:1077px;top:725px;width:1px;height:75px;background:#999"></div><div class="a" style="left:314px;top:800px;width:764px;height:1px;background:#999"></div><div class="t" style="left:323.3px;top:734px;font-size:12.6px;color:#000;">Command (local):</div><div class="a" style="left:432px;top:731px;width:636px;height:21px;background:#fff;border-top:1px solid #999;border-left:1px solid #999;border-right:1px solid #f4f4f4;border-bottom:1px solid #f4f4f4"></div><div class="a" style="left:1051px;top:732px;width:16px;height:18px;background:#e8e8e8;border:1px solid #888;border-top:2px solid #888"></div><svg style="left:1054px;top:738px" width="9" height="6" viewBox="0 0 9 6"><path d="M0.5,0.5 L8,0.5 L4.25,5 Z" fill="#000"/></svg><div class="a" style="left:319px;top:759px;width:753px;height:36px;background:#fff;border-top:1px solid #999;border-left:2px solid #999;border-right:1px solid #f4f4f4;border-bottom:1px solid #f4f4f4"></div><div class="a" style="left:56px;top:803px;width:334px;height:19px;border-top:1px solid #999;border-left:1px solid #999;border-right:1px solid #fff"></div><div class="a" style="left:393px;top:803px;width:100px;height:19px;border-top:1px solid #999;border-left:1px solid #999;border-right:1px solid #fff"></div><div class="a" style="left:495px;top:803px;width:100px;height:19px;border-top:1px solid #999;border-left:1px solid #999;border-right:1px solid #fff"></div><div class="a" style="left:597px;top:803px;width:482px;height:19px;border-top:1px solid #999;border-left:1px solid #999;border-right:1px solid #fff"></div><svg style="left:1064px;top:806px" width="16" height="16" viewBox="1064 806 16 16"><path d="M1068,821.5 L1079.5,810 M1072,821.5 L1079.5,814 M1076,821.5 L1079.5,818" stroke="#8a8a8a" stroke-width="1.2"/></svg></body></html>
